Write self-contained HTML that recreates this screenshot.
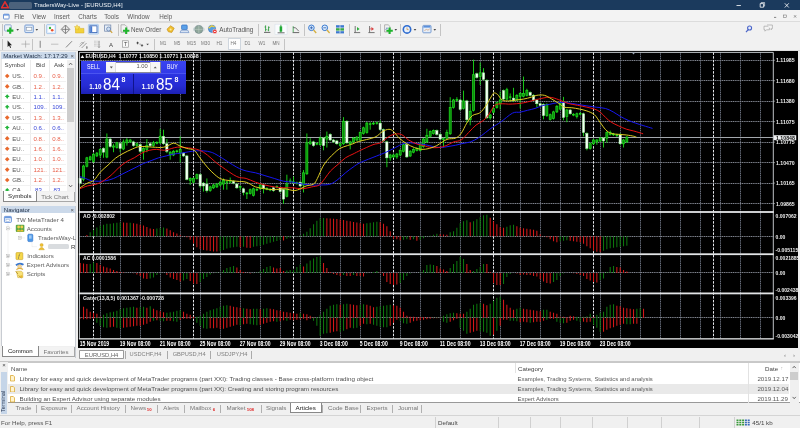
<!DOCTYPE html><html><head><meta charset="utf-8"><title>TradersWay-Live - [EURUSD,H4]</title><style>
*{box-sizing:border-box;margin:0;padding:0}
html{background:#f0f0f0}body{opacity:.999}html,body{width:800px;height:428px;overflow:hidden;background:#f0f0f0;font-family:"Liberation Sans",sans-serif;font-size:5.4px;color:#222}
.a{position:absolute}
.chart{position:absolute;display:block}
#title{left:0;top:0;width:800px;height:10.3px;background:#1b3a5d;color:#fff}
#menu{left:0;top:10.3px;width:800px;height:11.4px;background:#f3f3f3;border-bottom:0.6px solid #dcdcdc}
#tb1{left:0;top:21.7px;width:800px;height:15.3px;background:#f1f1f1}
#tb2{left:0;top:37px;width:800px;height:14px;background:#f1f1f1}
.t{position:absolute;white-space:nowrap;line-height:1}
.sep{position:absolute;width:0.6px;background:#c4c4c4}
.panel{position:absolute;background:#fff;border:0.6px solid #b9c0c8}
.phead{position:absolute;background:#cbd9ea;color:#1c2c44}
.tab{position:absolute;border:0.6px solid #a8a8a8;background:#f3f3f3;color:#555;text-align:center;line-height:1}
.tab.on{background:#fff;color:#222;border-color:#888}
.ic{position:absolute}
</style></head><body>
<div id="title" class="a"></div>
<svg class="ic" style="left:1px;top:1.2px" width="8" height="8" viewBox="0 0 8 8"><path d="M4 0.8L7.4 6.8H0.6Z" fill="none" stroke="#e03030" stroke-width="1.5"/></svg>
<div class="a" style="left:8.6px;top:1.6px;width:23px;height:7.4px;background:#4c627c;border-radius:1.5px;filter:blur(0.6px)"></div>
<div class="t " style="left:34px;top:2.1px;color:#eef2f6;font-size:6px">TradersWay-Live - [EURUSD,H4]</div>
<svg class="ic" style="left:735px;top:0" width="65" height="10.5" viewBox="0 0 65 10.5"><path d="M1.5 5.5h4.4" stroke="#fff" stroke-width="0.8"/><path d="M25.2 3.6h3.4v3.6h-3.4z" stroke="#fff" stroke-width="0.8" fill="none"/><path d="M26.2 3.4v-0.9h3.4v3.6h-0.9" stroke="#fff" stroke-width="0.6" fill="none"/><path d="M49.8 3.3l4 4.2M53.8 3.3l-4 4.2" stroke="#fff" stroke-width="0.8"/></svg>
<div id="menu" class="a"></div>
<svg class="ic" style="left:2.5px;top:12.5px" width="7" height="7" viewBox="0 0 7 7"><rect x="0.5" y="1.2" width="5.6" height="4.8" rx="0.8" fill="#fff" stroke="#4a78c8" stroke-width="0.8"/><rect x="0.5" y="1.2" width="5.6" height="1.4" fill="#6a98e0"/></svg>
<div class="t " style="left:14.2px;top:13.6px;font-size:6.3px;color:#5a5a5a">File</div>
<div class="t " style="left:32.3px;top:13.6px;font-size:6.3px;color:#5a5a5a">View</div>
<div class="t " style="left:54px;top:13.6px;font-size:6.3px;color:#5a5a5a">Insert</div>
<div class="t " style="left:78.3px;top:13.6px;font-size:6.3px;color:#5a5a5a">Charts</div>
<div class="t " style="left:104.2px;top:13.6px;font-size:6.3px;color:#5a5a5a">Tools</div>
<div class="t " style="left:127.2px;top:13.6px;font-size:6.3px;color:#5a5a5a">Window</div>
<div class="t " style="left:159.3px;top:13.6px;font-size:6.3px;color:#5a5a5a">Help</div>
<svg class="ic" style="left:772px;top:11px" width="28" height="10" viewBox="0 0 28 10"><path d="M2 6.4h2.2" stroke="#555" stroke-width="0.7"/><rect x="11.7" y="4" width="2.6" height="2.6" fill="none" stroke="#666" stroke-width="0.5"/><path d="M22 4.2l2.2 2.4M24.2 4.2l-2.2 2.4" stroke="#666" stroke-width="0.6"/></svg>
<div id="tb1" class="a"></div><div id="tb2" class="a"></div>
<div class="a" style="left:0;top:21.9px;width:199px;height:0.6px;background:#dcdcdc"></div>
<div class="a" style="left:0;top:36.9px;width:440px;height:0.6px;background:#dedede"></div>
<div class="a" style="left:0;top:50.4px;width:800px;height:0.6px;background:#dedede"></div>
<div class="sep" style="left:2.2px;top:24px;height:11.5px"></div>
<div class="sep" style="left:43.5px;top:24px;height:11.5px"></div>
<div class="sep" style="left:117.5px;top:24px;height:11.5px"></div>
<div class="sep" style="left:258px;top:24px;height:11.5px"></div>
<div class="sep" style="left:303.5px;top:24px;height:11.5px"></div>
<div class="sep" style="left:349px;top:24px;height:11.5px"></div>
<div class="sep" style="left:379.5px;top:24px;height:11.5px"></div>
<div class="sep" style="left:399.5px;top:24px;height:11.5px"></div>
<div class="sep" style="left:439.5px;top:24px;height:11.5px"></div>
<div class="sep" style="left:2.2px;top:38.5px;height:11px"></div>
<div class="sep" style="left:32px;top:38.5px;height:11px"></div>
<div class="sep" style="left:153.5px;top:38.5px;height:11px"></div>
<div class="sep" style="left:283.5px;top:38.5px;height:11px"></div>
<div class="t " style="left:131px;top:26.6px;font-size:6.3px;color:#555">New Order</div>
<div class="t " style="left:219.3px;top:26.6px;font-size:6.3px;color:#555">AutoTrading</div>
<div class="a" style="left:227.5px;top:38.3px;width:13.5px;height:11.4px;background:#fdfdfd;border:0.6px solid #cfd6de"></div>
<div class="t " style="left:160px;top:42px;font-size:4.6px;color:#777">M1</div>
<div class="t " style="left:174px;top:42px;font-size:4.6px;color:#777">M5</div>
<div class="t " style="left:187px;top:42px;font-size:4.6px;color:#777">M15</div>
<div class="t " style="left:201px;top:42px;font-size:4.6px;color:#777">M30</div>
<div class="t " style="left:216.5px;top:42px;font-size:4.6px;color:#777">H1</div>
<div class="t " style="left:230.5px;top:42px;font-size:4.6px;color:#777">H4</div>
<div class="t " style="left:244.5px;top:42px;font-size:4.6px;color:#777">D1</div>
<div class="t " style="left:258.5px;top:42px;font-size:4.6px;color:#777">W1</div>
<div class="t " style="left:272.5px;top:42px;font-size:4.6px;color:#777">MN</div>
<svg class="ic" style="left:0;top:22px" width="800" height="29" viewBox="0 22 800 29">
<rect x="4.6" y="24.8" width="6.6" height="6.2" rx="0.8" fill="#eaf1fa" stroke="#7d9cc8" stroke-width="0.8"/>
<path d="M6.999999999999999 30.6h6.4M10.2 27.400000000000002v6.4" stroke="#1fb42c" stroke-width="2.1" fill="none"/>
<path d="M16.4 29.099999999999998h2.6l-1.3 1.6z" fill="#444"/>
<rect x="24.9" y="25" width="8.4" height="7.6" rx="0.8" fill="#dfeaf8" stroke="#6c94cf" stroke-width="0.9"/><rect x="26.4" y="27.6" width="5.4" height="2.6" fill="#fff" stroke="#7a8aa0" stroke-width="0.5"/>
<path d="M35.5 29.099999999999998h2.6l-1.3 1.6z" fill="#444"/>
<rect x="46.6" y="24.6" width="9" height="9" rx="0.6" fill="#e4eefb" stroke="#9cc0ea" stroke-width="0.8"/><rect x="48.3" y="26.2" width="5.6" height="5.8" fill="#fff"/><circle cx="50" cy="28" r="1.2" fill="#3cb43c"/><circle cx="52.2" cy="30.2" r="1.3" fill="#e8502c"/>
<path d="M65.5 25l4.3 4.4l-4.3 4.4l-4.3 -4.4z" fill="#e9e9e9" stroke="#777" stroke-width="0.9"/><path d="M65.5 25.5v7.8M61.8 29.4h7.4" stroke="#666" stroke-width="0.7"/>
<path d="M75.5 27.2h4l1 1.2h3.4v4.6h-8.4z" fill="#f2d23a" stroke="#d4aa1c" stroke-width="0.5"/><path d="M77 24.8l0.9 1.7l1.9 0.2l-1.4 1.3l0.4 1.9l-1.8 -1l-1.7 1l0.4 -1.9l-1.4 -1.3l1.9 -0.2z" fill="#f8e05a" stroke="#d8ae20" stroke-width="0.4"/>
<rect x="88.4" y="24.4" width="10" height="9.6" rx="0.6" fill="#e4eefb" stroke="#9cc0ea" stroke-width="0.8"/><rect x="89.8" y="25.8" width="7.2" height="6.8" fill="#fff" stroke="#3a68b8" stroke-width="0.9"/><rect x="90.2" y="26.2" width="2" height="6" fill="#4a7ad0"/>
<rect x="104.6" y="25" width="6.2" height="6.2" fill="#e6eef8" stroke="#7a8eb0" stroke-width="0.8"/><circle cx="108.6" cy="29" r="2" fill="#cfe0f4" stroke="#5a78a8" stroke-width="0.7"/><path d="M110.2 30.6l2 2.3" stroke="#d0a030" stroke-width="1.1"/>
<path d="M121 24.8h4l1.8 1.8v5.6h-5.8z" fill="#f2f2f2" stroke="#999" stroke-width="0.7"/>
<path d="M123.0 30.8h6.4M126.2 27.6v6.4" stroke="#1fb42c" stroke-width="2.1" fill="none"/>
<path d="M167 29.2l3.6 -3.4l3.6 2.4l-2.4 4.2l-3.4 -0.6z" fill="#f0c030" stroke="#c89018" stroke-width="0.7"/><circle cx="170.6" cy="29.4" r="1" fill="#fbe9a0"/>
<rect x="181.6" y="25" width="5.6" height="4.6" rx="0.8" fill="#5aa0e8" stroke="#2c6cc0" stroke-width="0.7"/><path d="M180 32.6l1.2 -2.4h6.6l1.2 2.4z" fill="#d8e4f4" stroke="#5a82c0" stroke-width="0.6"/>
<circle cx="198.8" cy="29.4" r="4" fill="#8ea69a" stroke="#70848a" stroke-width="0.6"/><path d="M198.8 25.6v7.6M195 29.4h7.6" stroke="#c4d0c8" stroke-width="0.5"/><path d="M194.2 27.6q-1 1.8 0 3.6M203.6 27.6q1 1.8 0 3.6" stroke="#8aa" stroke-width="0.5" fill="none"/>
<circle cx="212" cy="28.8" r="3.6" fill="#58a0e0" stroke="#2c68b8" stroke-width="0.6"/><path d="M208.6 28.2l3 -2.4l3.2 1.2" stroke="#f0d040" stroke-width="1.3" fill="none"/><circle cx="214.8" cy="31.4" r="2.2" fill="#e83030" stroke="#fff" stroke-width="0.4"/><rect x="213.9" y="30.9" width="1.8" height="1" fill="#fff"/>
<path d="M264 32.4h6.4" stroke="#444" stroke-width="0.8"/><path d="M265.6 25.4v6M268.6 26.4v4.8M265.6 27h-1M265.6 29.6h1M268.6 27.4h1M268.6 30h-1" stroke="#2c9c3c" stroke-width="0.9"/>
<rect x="275" y="24.2" width="12" height="10.2" fill="#fafcfe" stroke="#d4dde8" stroke-width="0.5"/><path d="M277.6 32.8h7" stroke="#444" stroke-width="0.8"/><rect x="279.6" y="26.4" width="2.6" height="5.2" fill="#28b43c"/><path d="M280.9 24.8v7.6" stroke="#1a9a2c" stroke-width="0.8"/>
<path d="M292.6 32.6h6.6" stroke="#444" stroke-width="0.8"/><path d="M293.2 26.2v6" stroke="#2c9c3c" stroke-width="0.8"/><path d="M293.2 27.6l2.4 0.2l3.2 3.4" stroke="#555" stroke-width="0.8" fill="none"/>
<circle cx="311.4" cy="27.8" r="2.8" fill="#dcecfc" stroke="#3a7ad0" stroke-width="1"/><path d="M313.59999999999997 30l2.6 3" stroke="#d4b040" stroke-width="1.3"/>
<path d="M309.9 27.8h3" stroke="#2a5cb0" stroke-width="0.8"/>
<path d="M311.4 26.3v3" stroke="#2a5cb0" stroke-width="0.8"/>
<circle cx="324.8" cy="27.8" r="2.8" fill="#dcecfc" stroke="#3a7ad0" stroke-width="1"/><path d="M327.0 30l2.6 3" stroke="#d4b040" stroke-width="1.3"/>
<path d="M323.3 27.8h3" stroke="#2a5cb0" stroke-width="0.8"/>
<g><rect x="336" y="25.2" width="8" height="2.4" fill="#3c78d0"/><rect x="336" y="28.2" width="8" height="2.4" fill="#38a848"/><rect x="336" y="31.2" width="8" height="2.2" fill="#3c78d0"/><path d="M340 25.2v8.2" stroke="#f0f0f0" stroke-width="0.7"/></g>
<path d="M355.2 26v6.4M354 32.6h6.2" stroke="#555" stroke-width="0.8" fill="none"/><path d="M357 27l2.6 1.9l-2.6 1.9z" fill="#2cae3c"/>
<path d="M369.6 26v6.4M368.4 32.6h6.2" stroke="#555" stroke-width="0.8" fill="none"/><path d="M371.4 27l2.6 1.9l-2.6 1.9z" fill="#d84040"/><path d="M369.6 28.9h2" stroke="#d84040" stroke-width="0.7"/>
<path d="M384.6 24.8h3.6l1.8 1.8v5.4h-5.4z" fill="#f2f2f2" stroke="#999" stroke-width="0.7"/><path d="M385.6 30l1.4 -2.4l1.2 1.4" stroke="#3a6cc0" stroke-width="0.6" fill="none"/>
<path d="M386.40000000000003 30.8h6.4M389.6 27.6v6.4" stroke="#1fb42c" stroke-width="2.1" fill="none"/>
<path d="M394.5 29.099999999999998h2.6l-1.3 1.6z" fill="#444"/>
<circle cx="407" cy="29.4" r="3.7" fill="#e8f0fa" stroke="#2e6cd0" stroke-width="1.6"/><path d="M407 27.4v2.2h1.6" stroke="#c88a3a" stroke-width="0.7" fill="none"/>
<path d="M413.7 29.099999999999998h2.6l-1.3 1.6z" fill="#444"/>
<rect x="422.8" y="25.4" width="8.2" height="7.4" rx="0.8" fill="#e6eef8" stroke="#6c94cf" stroke-width="0.9"/><rect x="423.4" y="26" width="7" height="1.6" fill="#5a90dc"/><path d="M424.4 30.6l2 -1.2l1.6 0.8l1.8 -1.4" stroke="#d08a50" stroke-width="0.6" fill="none"/>
<path d="M433.5 29.099999999999998h2.6l-1.3 1.6z" fill="#444"/>
<circle cx="749.6" cy="28" r="2" fill="#e8eefc" stroke="#4a64c8" stroke-width="1.1"/><path d="M748.2 29.6l-2.2 2.6" stroke="#4a64c8" stroke-width="1.2"/>
<path d="M764 26.2h5.4v3.6h-3l-1.4 1.4v-1.4h-1z" fill="#f4f4f4" stroke="#999" stroke-width="0.6"/><path d="M767 25h5.4v3.6h-1v1.2l-1.2 -1.2" fill="#f4f4f4" stroke="#999" stroke-width="0.6"/>
<path d="M7.6 40.6v6.4l1.5 -1.4l1.1 2.3l0.9 -0.4l-1.1 -2.3h2z" fill="#222"/>
<path d="M25.6 40.6v7M21.4 44.1h8.4" stroke="#999" stroke-width="0.6"/>
<path d="M40.2 40.8v7" stroke="#555" stroke-width="0.7"/>
<path d="M51 44.2h7.4" stroke="#aaa" stroke-width="0.7"/>
<path d="M66 47.4l6 -6.2" stroke="#555" stroke-width="0.7"/>
<path d="M79.6 46.6l5 -5M81.6 48l5 -5" stroke="#666" stroke-width="0.6"/><path d="M80 44.4l2 -2.4l1.6 1.6" stroke="#888" stroke-width="0.5" fill="none"/><text x="86" y="48.6" font-size="3" fill="#444" font-family="'Liberation Sans',sans-serif">E</text>
<path d="M94 41.2h6M94 42.8h6M94 44.4h6M94 46h6" stroke="#999" stroke-width="0.5" stroke-dasharray="0.8 0.5"/><path d="M99 41v6.6M98 46.4l1 1.4l1 -1.4" stroke="#777" stroke-width="0.5" fill="none"/>
<text x="109" y="46.6" font-size="6" fill="#444" font-family="'Liberation Sans',sans-serif">A</text>
<rect x="122.6" y="40.8" width="6" height="6.4" fill="#fafafa" stroke="#888" stroke-width="0.6"/><text x="123.9" y="46.4" font-size="5.6" fill="#444" font-family="'Liberation Sans',sans-serif">T</text>
<path d="M137.6 41.6l1.5 1.6h-1v1h-1v-1h-1zM142 46.8l-1.5 -1.6h1v-1h1v1h1z" fill="#444"/><path d="M139.4 44.2l1.6 0" stroke="#666" stroke-width="0.5"/>
<path d="M146.29999999999998 43.699999999999996h2.6l-1.3 1.6z" fill="#444"/>
</svg>
<div class="panel" style="left:0.5px;top:51.5px;width:75px;height:151.5px;border-color:#c8ccd2"></div>
<div class="phead" style="left:1px;top:52px;width:74px;height:7px"></div>
<div class="t " style="left:3.3px;top:52.8px;font-size:6.1px;color:#1c2c44">Market Watch: 17:17:29</div>
<div class="t " style="left:70.5px;top:52.6px;font-size:6px;color:#555">×</div>
<div class="t " style="left:4.6px;top:62.3px;font-size:6.1px;color:#444">Symbol</div>
<div class="t " style="left:36px;top:62.3px;font-size:6.1px;color:#444">Bid</div>
<div class="t " style="left:54px;top:62.3px;font-size:6.1px;color:#444">Ask</div>
<div class="a" style="left:30.2px;top:59.5px;width:0.5px;height:131.5px;background:#ececec"></div>
<div class="a" style="left:48.8px;top:59.5px;width:0.5px;height:131.5px;background:#ececec"></div>
<div class="a" style="left:1px;top:59.2px;width:0.8px;height:132px;background:#e8e8e8"></div>
<div class="a" style="left:2px;top:81.1px;width:64px;height:0.5px;background:#f1f1f1"></div>
<div class="t " style="left:12.3px;top:73.1px;font-size:6.1px;color:#555">US..</div>
<div class="t " style="left:33.5px;top:73.1px;font-size:6.1px;color:#e8604a">0.9..</div>
<div class="t " style="left:52.2px;top:73.1px;font-size:6.1px;color:#e8604a">0.9..</div>
<div class="a" style="left:2px;top:91.5px;width:64px;height:0.5px;background:#f1f1f1"></div>
<div class="t " style="left:12.3px;top:83.5px;font-size:6.1px;color:#555">GB..</div>
<div class="t " style="left:33.5px;top:83.5px;font-size:6.1px;color:#e8604a">1.2..</div>
<div class="t " style="left:52.2px;top:83.5px;font-size:6.1px;color:#e8604a">1.2..</div>
<div class="a" style="left:2px;top:101.9px;width:64px;height:0.5px;background:#f1f1f1"></div>
<div class="t " style="left:12.3px;top:93.89999999999999px;font-size:6.1px;color:#555">EU..</div>
<div class="t " style="left:33.5px;top:93.89999999999999px;font-size:6.1px;color:#3a48d8">1.1..</div>
<div class="t " style="left:52.2px;top:93.89999999999999px;font-size:6.1px;color:#3a48d8">1.1..</div>
<div class="a" style="left:2px;top:112.3px;width:64px;height:0.5px;background:#f1f1f1"></div>
<div class="t " style="left:12.3px;top:104.3px;font-size:6.1px;color:#555">US..</div>
<div class="t " style="left:33.5px;top:104.3px;font-size:6.1px;color:#3a48d8">109..</div>
<div class="t " style="left:52.2px;top:104.3px;font-size:6.1px;color:#3a48d8">109..</div>
<div class="a" style="left:2px;top:122.7px;width:64px;height:0.5px;background:#f1f1f1"></div>
<div class="t " style="left:12.3px;top:114.69999999999999px;font-size:6.1px;color:#555">US..</div>
<div class="t " style="left:33.5px;top:114.69999999999999px;font-size:6.1px;color:#e8604a">1.3..</div>
<div class="t " style="left:52.2px;top:114.69999999999999px;font-size:6.1px;color:#e8604a">1.3..</div>
<div class="a" style="left:2px;top:133.1px;width:64px;height:0.5px;background:#f1f1f1"></div>
<div class="t " style="left:12.3px;top:125.1px;font-size:6.1px;color:#555">AU..</div>
<div class="t " style="left:33.5px;top:125.1px;font-size:6.1px;color:#3a48d8">0.6..</div>
<div class="t " style="left:52.2px;top:125.1px;font-size:6.1px;color:#3a48d8">0.6..</div>
<div class="a" style="left:2px;top:143.5px;width:64px;height:0.5px;background:#f1f1f1"></div>
<div class="t " style="left:12.3px;top:135.5px;font-size:6.1px;color:#555">EU..</div>
<div class="t " style="left:33.5px;top:135.5px;font-size:6.1px;color:#e8604a">0.8..</div>
<div class="t " style="left:52.2px;top:135.5px;font-size:6.1px;color:#e8604a">0.8..</div>
<div class="a" style="left:2px;top:153.9px;width:64px;height:0.5px;background:#f1f1f1"></div>
<div class="t " style="left:12.3px;top:145.9px;font-size:6.1px;color:#555">EU..</div>
<div class="t " style="left:33.5px;top:145.9px;font-size:6.1px;color:#e8604a">1.6..</div>
<div class="t " style="left:52.2px;top:145.9px;font-size:6.1px;color:#e8604a">1.6..</div>
<div class="a" style="left:2px;top:164.3px;width:64px;height:0.5px;background:#f1f1f1"></div>
<div class="t " style="left:12.3px;top:156.29999999999998px;font-size:6.1px;color:#555">EU..</div>
<div class="t " style="left:33.5px;top:156.29999999999998px;font-size:6.1px;color:#e8604a">1.0..</div>
<div class="t " style="left:52.2px;top:156.29999999999998px;font-size:6.1px;color:#e8604a">1.0..</div>
<div class="a" style="left:2px;top:174.7px;width:64px;height:0.5px;background:#f1f1f1"></div>
<div class="t " style="left:12.3px;top:166.70000000000002px;font-size:6.1px;color:#555">EU..</div>
<div class="t " style="left:33.5px;top:166.70000000000002px;font-size:6.1px;color:#e8604a">121..</div>
<div class="t " style="left:52.2px;top:166.70000000000002px;font-size:6.1px;color:#e8604a">121..</div>
<div class="a" style="left:2px;top:185.1px;width:64px;height:0.5px;background:#f1f1f1"></div>
<div class="t " style="left:12.3px;top:177.1px;font-size:6.1px;color:#555">GB..</div>
<div class="t " style="left:33.5px;top:177.1px;font-size:6.1px;color:#e8604a">1.2..</div>
<div class="t " style="left:52.2px;top:177.1px;font-size:6.1px;color:#e8604a">1.2..</div>
<div class="a" style="left:2px;top:195.5px;width:64px;height:0.5px;background:#f1f1f1"></div>
<div class="a" style="left:2px;top:187.2px;width:64px;height:4.6px;overflow:hidden"><div class="t" style="left:10.3px;top:0.3px;font-size:6.1px;color:#333">CA..</div><div class="t" style="left:33px;top:0.3px;font-size:6.1px;color:#3a48d8">83..</div><div class="t" style="left:51.5px;top:0.3px;font-size:6.1px;color:#3a48d8">83..</div></div>
<svg class="ic" style="left:1px;top:70px" width="66" height="121" viewBox="1 70 66 121"><path d="M7.2 73.7l2.3 2.3l-2.3 2.3l-2.3 -2.3z" fill="#e8682c"/><path d="M7.2 84.1l2.3 2.3l-2.3 2.3l-2.3 -2.3z" fill="#e8682c"/><path d="M7.2 94.3l2.5 2.6h-1.3l-1.2 2.2l-1.2 -2.2h-1.3z" fill="#22b43a"/><path d="M7.2 104.7l2.5 2.6h-1.3l-1.2 2.2l-1.2 -2.2h-1.3z" fill="#22b43a"/><path d="M7.2 115.3l2.3 2.3l-2.3 2.3l-2.3 -2.3z" fill="#e8682c"/><path d="M7.2 125.5l2.5 2.6h-1.3l-1.2 2.2l-1.2 -2.2h-1.3z" fill="#22b43a"/><path d="M7.2 136.1l2.3 2.3l-2.3 2.3l-2.3 -2.3z" fill="#e8682c"/><path d="M7.2 146.5l2.3 2.3l-2.3 2.3l-2.3 -2.3z" fill="#e8682c"/><path d="M7.2 156.9l2.3 2.3l-2.3 2.3l-2.3 -2.3z" fill="#e8682c"/><path d="M7.2 167.3l2.3 2.3l-2.3 2.3l-2.3 -2.3z" fill="#e8682c"/><path d="M7.2 177.7l2.3 2.3l-2.3 2.3l-2.3 -2.3z" fill="#e8682c"/><path d="M7.2 187.9l2.5 2.6h-1.3l-1.2 2.2l-1.2 -2.2h-1.3z" fill="#22b43a"/></svg>
<div class="a" style="left:66.5px;top:59.5px;width:8px;height:131.5px;background:#f0f0f0"></div>
<div class="a" style="left:67.3px;top:67.6px;width:6.5px;height:54.6px;background:#cdcdcd"></div>
<svg class="ic" style="left:0;top:0" width="800" height="428" viewBox="0 0 800 428"><path d="M69.0 64.9l1.6 -1.8l1.6 1.8" stroke="#444" stroke-width="0.8" fill="none"/></svg>
<svg class="ic" style="left:0;top:0" width="800" height="428" viewBox="0 0 800 428"><path d="M69.0 185.1l1.6 1.8l1.6 -1.8" stroke="#444" stroke-width="0.8" fill="none"/></svg>
<div class="a" style="left:1px;top:191px;width:74px;height:11.5px;background:#f0f0f0"></div>
<div class="tab on" style="left:3px;top:191px;width:33.5px;height:10.8px;border-top:none;font-size:6.1px;padding-top:2.2px">Symbols</div>
<div class="tab" style="left:36.5px;top:192px;width:38px;height:9.8px;border-top:none;border-left:none;font-size:6.1px;padding-top:1.6px;color:#777">Tick Chart</div>
<div class="panel" style="left:0.5px;top:205.5px;width:75px;height:152.5px;border-color:#c8ccd2"></div>
<div class="phead" style="left:1px;top:206.3px;width:74px;height:6.6px"></div>
<div class="t " style="left:3.8px;top:206.8px;font-size:6.1px;color:#1c2c44">Navigator</div>
<div class="t " style="left:70.5px;top:206.6px;font-size:6px;color:#555">×</div>
<div class="t " style="left:16.3px;top:216.6px;font-size:6.1px;color:#5a5a5a">TW MetaTrader 4</div>
<div class="t " style="left:26.8px;top:225.5px;font-size:6.1px;color:#5a5a5a">Accounts</div>
<div class="t " style="left:38px;top:235px;font-size:6.1px;color:#5a5a5a">TradersWay-L</div>
<div class="t " style="left:27.3px;top:253.3px;font-size:6.1px;color:#5a5a5a">Indicators</div>
<div class="t " style="left:26.8px;top:262.3px;font-size:6.1px;color:#5a5a5a">Expert Advisors</div>
<div class="t " style="left:26.8px;top:271.3px;font-size:6.1px;color:#5a5a5a">Scripts</div>
<div class="a" style="left:48px;top:244.2px;width:21px;height:5px;background:#d9dcdf;border-radius:1.5px"></div>
<div class="t " style="left:71px;top:243.8px;font-size:6.1px;color:#333">R</div>
<svg class="ic" style="left:0;top:213px" width="76" height="70" viewBox="0 213 76 70">
<path d="M8 224v50.5M8 228.4h4M8 256.2h4M8 265.2h4M8 274.2h4M20 232v6M20 237.9h5M32 242v4.7h5" stroke="#c4c4c4" stroke-width="0.4" stroke-dasharray="0.5 0.5" fill="none"/>
<rect x="6.5" y="226.9" width="3" height="3" fill="#fff" stroke="#aaa" stroke-width="0.4"/><path d="M7.1 228.4h1.8" stroke="#555" stroke-width="0.4"/>
<rect x="18.5" y="236.4" width="3" height="3" fill="#fff" stroke="#aaa" stroke-width="0.4"/><path d="M19.1 237.9h1.8" stroke="#555" stroke-width="0.4"/>
<rect x="6.5" y="254.7" width="3" height="3" fill="#fff" stroke="#aaa" stroke-width="0.4"/><path d="M7.1 256.2h1.8" stroke="#555" stroke-width="0.4"/><path d="M8 255.29999999999998v1.8" stroke="#555" stroke-width="0.4"/>
<rect x="6.5" y="263.7" width="3" height="3" fill="#fff" stroke="#aaa" stroke-width="0.4"/><path d="M7.1 265.2h1.8" stroke="#555" stroke-width="0.4"/><path d="M8 264.3v1.8" stroke="#555" stroke-width="0.4"/>
<rect x="6.5" y="272.7" width="3" height="3" fill="#fff" stroke="#aaa" stroke-width="0.4"/><path d="M7.1 274.2h1.8" stroke="#555" stroke-width="0.4"/><path d="M8 273.3v1.8" stroke="#555" stroke-width="0.4"/>
<rect x="4.4" y="216.4" width="7" height="6" rx="0.8" fill="#eef4fc" stroke="#4a7cd0" stroke-width="0.8"/><rect x="4.8" y="216.8" width="6.2" height="1.4" fill="#6a9ae0"/><rect x="6" y="219.4" width="3.6" height="2" fill="#fff" stroke="#7a9acc" stroke-width="0.4"/>
<rect x="15.8" y="224.8" width="8.6" height="7.2" rx="1" fill="#5aa848"/><circle cx="18.6" cy="227" r="1.4" fill="#f4d050"/><circle cx="21.8" cy="227" r="1.4" fill="#f4d050"/><path d="M16.6 231.4q2 -3.6 4 0zM19.8 231.4q2 -3.6 4 0z" fill="#f0c030"/>
<rect x="27.8" y="234.2" width="5" height="7.4" rx="1" fill="#4a98e8" stroke="#2a6cc8" stroke-width="0.6"/><rect x="29" y="235.6" width="2.6" height="1" fill="#d8ecff"/><rect x="29" y="237.4" width="2.6" height="1" fill="#d8ecff"/>
<circle cx="41.6" cy="245" r="1.6" fill="#f0c030" stroke="#c89a18" stroke-width="0.4"/><path d="M38.8 249.8q2.8 -5 5.6 0z" fill="#f0c030" stroke="#c89a18" stroke-width="0.4"/>
<rect x="16" y="252.6" width="6.8" height="7" rx="0.8" fill="#f6d84a" stroke="#c8a020" stroke-width="0.6"/><text x="18.2" y="258.2" font-size="5.4" font-style="italic" fill="#555" font-family="'Liberation Serif',serif">f</text>
<path d="M15.4 264.6q4 -3.6 8.6 -0.6l-1 1.4q-3.4 -1.6 -6.6 0.6z" fill="#3a78d0"/><circle cx="19.6" cy="266.6" r="2" fill="#f4d8a0" stroke="#c8a060" stroke-width="0.4"/><path d="M16.4 269.6q3.2 -2.6 6.6 0" stroke="#e0b040" stroke-width="1.2" fill="none"/>
<path d="M16.4 271.2h5l1.4 1.4v5h-5z" fill="#f8e27a" stroke="#c8a020" stroke-width="0.5"/><path d="M15.6 271.4l2.4 2.6M18.6 275.6l3 2.4" stroke="#b08a20" stroke-width="0.8"/><circle cx="21.4" cy="276.4" r="1.2" fill="#e8b830"/>
</svg>
<div class="a" style="left:1px;top:346px;width:74px;height:11.6px;background:#f0f0f0"></div>
<div class="tab on" style="left:2px;top:346px;width:36.5px;height:10.8px;border-top:none;font-size:6.1px;padding-top:2.2px">Common</div>
<div class="tab" style="left:38.5px;top:347px;width:36px;height:9.8px;border-top:none;border-left:none;font-size:6.1px;padding-top:1.6px;color:#777">Favorites</div>
<svg class="chart" width="720" height="297" viewBox="0 0 720 297" style="left:78px;top:51px">
<rect x="0" y="0" width="720" height="297" fill="#000"/>
<path d="M22.5 1.4V287.8M42.5 1.4V287.8M62.5 1.4V287.8M82.5 1.4V287.8M102.5 1.4V287.8M122.5 1.4V287.8M142.5 1.4V287.8M162.5 1.4V287.8M182.5 1.4V287.8M202.5 1.4V287.8M222.5 1.4V287.8M242.5 1.4V287.8M262.5 1.4V287.8M282.5 1.4V287.8M302.5 1.4V287.8M322.5 1.4V287.8M342.5 1.4V287.8M362.5 1.4V287.8M382.5 1.4V287.8M402.5 1.4V287.8M422.5 1.4V287.8M442.5 1.4V287.8M462.5 1.4V287.8M482.5 1.4V287.8M502.5 1.4V287.8M522.5 1.4V287.8M542.5 1.4V287.8M562.5 1.4V287.8M582.5 1.4V287.8M602.5 1.4V287.8M622.5 1.4V287.8M642.5 1.4V287.8M662.5 1.4V287.8M682.5 1.4V287.8" stroke="#686e7c" stroke-width="1" stroke-dasharray="1.25 0.55" fill="none"/>
<path d="M1.4 9.5H695.3M1.4 29.5H695.3M1.4 50.5H695.3M1.4 70.5H695.3M1.4 91.5H695.3M1.4 111.5H695.3M1.4 132.5H695.3M1.4 152.5H695.3M1.4 185.5H695.3M1.4 221.5H695.3M1.4 266.5H695.3" stroke="#7e828c" stroke-width="1" stroke-dasharray="1.25 0.55" fill="none"/>
<path d="M15.5 1.4V287.8M115.5 1.4V287.8M215.5 1.4V287.8M315.5 1.4V287.8M415.5 1.4V287.8M515.5 1.4V287.8M635.5 1.4V287.8" stroke="#e4e6ea" stroke-width="1" stroke-dasharray="2.5 1.25" fill="none"/>
<path d="M1.4 86.5H695.3" stroke="#a4a8ae" stroke-width="1"/>
<path d="M5.53 113.75V130.25M8.87 105.88V116.38M12.2 104.75V109.81M15.53 102.13V111.69M18.87 101V106.06M22.2 97.25V106.81M28.87 82.44V107.19M35.53 92.75V101.19M38.87 90.88V97.63M45.53 88.44V99.13M48.87 87.13V94.63M52.2 87.88V92M58.87 91.63V95.75M65.53 96.31V108.69M68.87 88.06V101.19M75.53 89.94V95.75M78.87 90.31V93.31M82.2 77.75V92.94M92.2 100.06V108.69M95.53 99.13V105.13M98.87 98.75V101.75M102.2 85.25V111.5M112.2 126.31V134M115.53 126.31V132.31M118.87 122.56V128.56M132.2 134.75V140.75M135.53 132.88V137.94M138.87 131.94V137M142.2 130.06V135.13M145.53 127.44V138.69M148.87 129.69V138.69M152.2 126.5V132.31M162.2 134.38V139.63M168.87 140.94V148.06M172.2 137.56V143.56M175.53 136.63V145.44M178.86 137.19V140.19M182.2 132.88V138.88M188.86 136.25V139.25M192.2 137.19V140.19M198.86 134.38V137.38M208.86 123.69V146.38M212.2 127.44V131.75M215.53 125.56V132.69M218.86 130.63V133.63M225.53 119V141.5M228.86 82.44V123.88M232.2 87.13V93.88M238.86 91.25V94.25M242.2 85.25V94.81M248.86 80.56V96.5M262.2 91.63V95.56M265.53 66.12V93.88M272.2 89.75V98.38M275.53 86V92M278.86 85.06V90.13M282.2 80.38V90.13M285.53 75.69V83.56M288.86 71V82.63M292.2 71.19V78.69M295.53 71V74M298.86 70.63V73.63M312.2 102.88V109.63M315.53 102.88V107M318.86 101.94V107.75M322.2 98.19V105.13M325.53 92.56V101.38M332.2 99.13V106.06M335.53 97.25V102.31M338.86 96.31V100.44M342.2 91.63V100.44M345.53 86.94V96.69M348.86 77.75V92M352.2 79.44V86.38M355.53 78.5V83.56M365.53 86.56V96.5M368.86 78.69V88.25M372.2 46.19V83.88M375.53 47.88V57.63M378.86 46.19V50.5M385.53 39.63V58.56M392.2 52.75V74.31M395.53 8.69V60.44M402.2 11.5V34M412.2 62.88V68.69M415.53 56.31V62.31M418.86 50.69V57.63M422.2 40.56V58.38M428.86 36.81V49.19M432.2 42.44V50.88M438.86 43.19V50.13M442.2 41.31V57.44M445.53 25.56V46.38M448.86 37.75V45.44M468.86 52.25V65.75M472.2 62.56V69.5M475.53 59.75V68.56M478.86 54.13V62M482.2 51.31V59.19M488.86 57.88V71.19M495.53 62.19V65.19M498.86 61.63V67.44M502.2 61.25V64.25M512.19 91.63V98.56M515.53 87.88V93.88M518.86 87.88V93.69M522.19 86V91.06M528.86 80.38V91.81M532.19 79.63V84.5M535.53 81.88V84.88M538.86 82.81V85.81M545.53 87.88V96.5M548.86 85.06V92M2.2 126.31V133.25M25.53 96.31V106.81M32.2 86.94V96.69M42.2 91.44V101.19M55.53 89.75V95.75M62.2 92.56V102.13M72.2 91.63V95.75M85.53 78.69V93.88M88.87 88.06V102.13M105.53 101V106.06M108.87 103.81V129.31M122.2 122.56V136.81M125.53 131V140.56M128.87 127.44V141.5M155.53 129.13V133.25M158.87 131.94V137.94M165.53 136.63V144.31M185.53 132.88V142.44M195.53 135.69V140.75M202.2 135.69V141.69M205.53 137.56V152.75M222.2 130.06V136.06M235.53 89.75V95.75M245.53 86V99.31M252.2 82.25V90.13M255.53 87.88V92M258.86 88.81V93.88M268.86 69.12V92.94M302.2 69.31V79.81M305.53 77.56V91.06M308.86 89.75V116.19M328.86 92.56V107M358.86 78.5V84.5M362.2 82.25V89.19M382.2 47.88V59.5M388.86 48.81V71.5M398.86 21.63V27.63M405.53 17.13V29.5M408.86 28.19V67.94M425.53 38.5V49.19M435.53 36.81V51.06M452.2 40.38V45.44M455.53 43.19V50.13M458.86 47.88V56.5M462.2 51.63V55.75M465.53 52.25V68.38M485.53 45.88V69.31M492.2 57.88V63.88M505.53 61.63V85.25M508.86 81.31V99.31M525.53 86V96.5M542.19 82.25V93.88" stroke="#19e019" stroke-width="0.9" fill="none"/>
<g fill="#0c8a0c" stroke="#1ee01e" stroke-width="0.7"><rect x="4.53" y="115.06" width="2.0" height="13.31"/><rect x="7.87" y="106.81" width="2.0" height="8.44"/><rect x="11.3" y="105.88" width="1.8" height="2.81"/><rect x="14.53" y="103.25" width="2.0" height="7.31"/><rect x="17.97" y="102.13" width="1.8" height="2.81"/><rect x="21.2" y="98.38" width="2.0" height="5.63"/><rect x="27.87" y="88.06" width="2.0" height="18"/><rect x="34.63" y="95" width="1.8" height="1.13"/><rect x="37.87" y="91.81" width="2.0" height="4.69"/><rect x="44.53" y="90.88" width="2.0" height="7.13"/><rect x="47.87" y="89" width="2.0" height="2.81"/><rect x="51.2" y="89" width="2.0" height="1.88"/><rect x="57.87" y="92.75" width="2.0" height="1.88"/><rect x="64.53" y="97.44" width="2.0" height="2.81"/><rect x="67.87" y="94.63" width="2.0" height="3.75"/><rect x="74.53" y="91.81" width="2.0" height="2.81"/><rect x="77.97" y="91.44" width="1.8" height="0.8"/><rect x="81.2" y="85.25" width="2.0" height="6.56"/><rect x="91.2" y="101.19" width="2.0" height="2.81"/><rect x="94.53" y="100.25" width="2.0" height="3.75"/><rect x="97.97" y="99.88" width="1.8" height="0.8"/><rect x="101.2" y="98.38" width="2.0" height="3.75"/><rect x="111.2" y="127.44" width="2.0" height="1.88"/><rect x="114.53" y="127.44" width="2.0" height="3.75"/><rect x="117.87" y="123.69" width="2.0" height="3.75"/><rect x="131.2" y="135.88" width="2.0" height="3.75"/><rect x="134.53" y="134" width="2.0" height="2.81"/><rect x="137.87" y="133.06" width="2.0" height="2.81"/><rect x="141.2" y="131.19" width="2.0" height="2.81"/><rect x="144.53" y="129.31" width="2.0" height="3.75"/><rect x="147.97" y="130.81" width="1.8" height="0.8"/><rect x="151.3" y="129.31" width="1.8" height="1.88"/><rect x="161.3" y="135.5" width="1.8" height="0.8"/><rect x="167.97" y="142.06" width="1.8" height="0.8"/><rect x="171.2" y="138.69" width="2.0" height="3.75"/><rect x="174.53" y="137.75" width="2.0" height="6.56"/><rect x="177.96" y="138.31" width="1.8" height="0.8"/><rect x="181.2" y="134" width="2.0" height="3.75"/><rect x="187.96" y="137.38" width="1.8" height="0.8"/><rect x="191.3" y="138.31" width="1.8" height="0.8"/><rect x="197.96" y="135.5" width="1.8" height="0.8"/><rect x="207.86" y="133.06" width="2.0" height="12.19"/><rect x="211.3" y="129.88" width="1.8" height="0.8"/><rect x="214.63" y="130.81" width="1.8" height="0.8"/><rect x="217.96" y="131.75" width="1.8" height="0.8"/><rect x="224.53" y="121.81" width="2.0" height="12.19"/><rect x="227.86" y="91.81" width="2.0" height="30.94"/><rect x="231.2" y="90.88" width="2.0" height="1.88"/><rect x="237.96" y="92.38" width="1.8" height="0.8"/><rect x="241.2" y="87.13" width="2.0" height="6.56"/><rect x="247.86" y="85.25" width="2.0" height="2.81"/><rect x="261.3" y="92.75" width="1.8" height="1.88"/><rect x="264.53" y="70.25" width="2.0" height="22.5"/><rect x="271.2" y="90.88" width="2.0" height="1.88"/><rect x="274.53" y="87.13" width="2.0" height="3.75"/><rect x="277.86" y="86.19" width="2.0" height="2.81"/><rect x="281.2" y="81.5" width="2.0" height="7.5"/><rect x="284.53" y="76.81" width="2.0" height="5.63"/><rect x="287.86" y="72.13" width="2.0" height="9.38"/><rect x="291.3" y="72.69" width="1.8" height="0.8"/><rect x="294.63" y="72.13" width="1.8" height="0.8"/><rect x="297.96" y="71.75" width="1.8" height="0.8"/><rect x="311.2" y="104" width="2.0" height="2.81"/><rect x="314.53" y="104" width="2.0" height="1.88"/><rect x="317.86" y="103.06" width="2.0" height="2.81"/><rect x="321.2" y="99.31" width="2.0" height="4.69"/><rect x="324.53" y="93.69" width="2.0" height="6.56"/><rect x="331.2" y="100.25" width="2.0" height="4.69"/><rect x="334.53" y="98.38" width="2.0" height="2.81"/><rect x="337.86" y="97.44" width="2.0" height="1.88"/><rect x="341.2" y="92.75" width="2.0" height="6.56"/><rect x="344.53" y="88.06" width="2.0" height="7.5"/><rect x="347.86" y="84.31" width="2.0" height="6.56"/><rect x="351.2" y="80.56" width="2.0" height="4.69"/><rect x="354.53" y="79.63" width="2.0" height="2.81"/><rect x="364.63" y="87.69" width="1.8" height="0.8"/><rect x="367.86" y="81.5" width="2.0" height="5.63"/><rect x="371.2" y="56.5" width="2.0" height="26.25"/><rect x="374.53" y="49" width="2.0" height="7.5"/><rect x="377.96" y="48.63" width="1.8" height="0.8"/><rect x="384.53" y="49.94" width="2.0" height="7.5"/><rect x="391.2" y="60.25" width="2.0" height="8.44"/><rect x="394.53" y="23.69" width="2.0" height="35.63"/><rect x="401.2" y="21.81" width="2.0" height="3.75"/><rect x="411.2" y="64" width="2.0" height="2.81"/><rect x="414.53" y="57.44" width="2.0" height="3.75"/><rect x="417.86" y="51.81" width="2.0" height="4.69"/><rect x="421.2" y="49" width="2.0" height="3.75"/><rect x="427.86" y="38.69" width="2.0" height="9.38"/><rect x="431.3" y="45.81" width="1.8" height="0.8"/><rect x="437.86" y="44.31" width="2.0" height="4.69"/><rect x="441.2" y="42.44" width="2.0" height="2.81"/><rect x="444.53" y="42.44" width="2.0" height="2.81"/><rect x="447.86" y="39.63" width="2.0" height="4.69"/><rect x="467.86" y="53.38" width="2.0" height="11.25"/><rect x="471.2" y="63.69" width="2.0" height="4.69"/><rect x="474.53" y="60.88" width="2.0" height="6.56"/><rect x="477.86" y="55.25" width="2.0" height="5.63"/><rect x="481.2" y="52.44" width="2.0" height="5.63"/><rect x="487.86" y="59" width="2.0" height="6.56"/><rect x="494.63" y="63.31" width="1.8" height="0.8"/><rect x="497.86" y="62.75" width="2.0" height="2.81"/><rect x="501.3" y="62.38" width="1.8" height="0.8"/><rect x="511.19" y="92.75" width="2.0" height="4.69"/><rect x="514.53" y="89" width="2.0" height="3.75"/><rect x="517.86" y="89" width="2.0" height="1.88"/><rect x="521.19" y="87.13" width="2.0" height="2.81"/><rect x="527.86" y="81.5" width="2.0" height="5.63"/><rect x="531.19" y="81.5" width="2.0" height="1.88"/><rect x="534.63" y="83" width="1.8" height="0.8"/><rect x="537.96" y="83.94" width="1.8" height="0.8"/><rect x="544.53" y="89" width="2.0" height="3.75"/><rect x="547.86" y="86.19" width="2.0" height="4.69"/></g>
<g fill="#f4fff4" stroke="#9df09d" stroke-width="0.5"><rect x="1.05" y="127.44" width="2.3" height="4.69"/><rect x="24.38" y="97.44" width="2.3" height="3.75"/><rect x="31.05" y="88.06" width="2.3" height="7.5"/><rect x="41.05" y="92.56" width="2.3" height="4.88"/><rect x="54.38" y="90.88" width="2.3" height="3.75"/><rect x="61.05" y="93.69" width="2.3" height="6.56"/><rect x="71.05" y="92.75" width="2.3" height="1.88"/><rect x="84.38" y="85.25" width="2.3" height="7.5"/><rect x="87.72" y="92.75" width="2.3" height="7.5"/><rect x="104.38" y="102.13" width="2.3" height="2.81"/><rect x="107.72" y="104.94" width="2.3" height="23.44"/><rect x="121.05" y="123.69" width="2.3" height="11.25"/><rect x="124.38" y="132.13" width="2.3" height="2.81"/><rect x="127.72" y="133.06" width="2.3" height="6.56"/><rect x="154.38" y="130.25" width="2.3" height="1.88"/><rect x="157.72" y="133.06" width="2.3" height="3.75"/><rect x="164.38" y="137.75" width="2.3" height="3.75"/><rect x="184.38" y="134" width="2.3" height="3.75"/><rect x="194.38" y="136.81" width="2.3" height="2.81"/><rect x="201.05" y="136.81" width="2.3" height="3.75"/><rect x="204.38" y="138.69" width="2.3" height="9.38"/><rect x="221.05" y="131.19" width="2.3" height="3.75"/><rect x="234.38" y="90.88" width="2.3" height="3.75"/><rect x="244.38" y="87.13" width="2.3" height="7.5"/><rect x="251.05" y="83.38" width="2.3" height="5.63"/><rect x="254.38" y="89" width="2.3" height="1.88"/><rect x="257.71" y="89.94" width="2.3" height="2.81"/><rect x="267.71" y="70.25" width="2.3" height="21.56"/><rect x="301.05" y="72.13" width="2.3" height="6.56"/><rect x="304.38" y="78.69" width="2.3" height="11.25"/><rect x="307.71" y="90.88" width="2.3" height="15.94"/><rect x="327.71" y="93.69" width="2.3" height="12.19"/><rect x="357.71" y="79.63" width="2.3" height="3.75"/><rect x="361.05" y="83.38" width="2.3" height="4.69"/><rect x="381.05" y="49" width="2.3" height="9.38"/><rect x="387.71" y="49.94" width="2.3" height="18.75"/><rect x="397.71" y="22.75" width="2.3" height="3.75"/><rect x="404.38" y="21.81" width="2.3" height="6.56"/><rect x="407.71" y="29.31" width="2.3" height="37.5"/><rect x="424.38" y="39.63" width="2.3" height="8.44"/><rect x="434.38" y="47.13" width="2.3" height="2.81"/><rect x="451.05" y="41.5" width="2.3" height="2.81"/><rect x="454.38" y="44.31" width="2.3" height="4.69"/><rect x="457.71" y="49" width="2.3" height="3.75"/><rect x="461.05" y="52.75" width="2.3" height="1.88"/><rect x="464.38" y="53.38" width="2.3" height="11.25"/><rect x="484.38" y="51.5" width="2.3" height="15"/><rect x="491.05" y="59" width="2.3" height="3.75"/><rect x="504.38" y="62.75" width="2.3" height="18.75"/><rect x="507.71" y="82.44" width="2.3" height="15"/><rect x="524.38" y="87.13" width="2.3" height="2.81"/><rect x="541.04" y="83.38" width="2.3" height="9.38"/></g>
<path d="M1.88 125.56C2.81 125.88 5.63 126.75 7.5 127.44C9.38 128.13 10.94 129.22 13.13 129.69C15.31 130.16 18.13 130.25 20.63 130.25C23.13 130.25 25.63 130.16 28.13 129.69C30.63 129.22 33.13 128.44 35.63 127.44C38.13 126.44 40.63 124.94 43.13 123.69C45.63 122.44 48.13 121.19 50.63 119.94C53.13 118.69 55.63 117.44 58.13 116.19C60.63 114.94 63.13 113.53 65.63 112.44C68.13 111.34 70.63 110.56 73.13 109.63C75.63 108.69 78.13 107.59 80.63 106.81C83.13 106.03 85.63 105.56 88.13 104.94C90.63 104.31 93.13 103.53 95.63 103.06C98.13 102.59 100.63 102.5 103.13 102.13C105.63 101.75 108.13 101.19 110.63 100.81C113.13 100.44 115.63 100.03 118.13 99.88C120.63 99.72 123.13 99.66 125.63 99.88C128.13 100.09 130.63 100.34 133.13 101.19C135.63 102.03 136.36 102.44 140.63 104.94C144.9 107.44 154.17 113.69 158.75 116.19C163.33 118.69 165 119 168.13 119.94C171.25 120.88 174.38 121.03 177.5 121.81C180.63 122.59 183.75 123.69 186.88 124.63C190 125.56 193.13 126.5 196.25 127.44C199.38 128.38 202.5 129.63 205.63 130.25C208.75 130.88 211.88 130.72 215 131.19C218.13 131.66 221.25 132.59 224.38 133.06C227.5 133.53 230.63 133.84 233.75 134C236.88 134.16 240 134.16 243.13 134C246.25 133.84 249.69 134 252.5 133.06C255.31 132.13 257.5 130.25 260 128.38C262.5 126.5 265 123.84 267.5 121.81C270 119.78 272.5 117.91 275 116.19C277.5 114.47 278.54 113.38 282.5 111.5C286.46 109.63 294.48 106.66 298.75 104.94C303.02 103.22 305 102.59 308.13 101.19C311.25 99.78 314.69 97.91 317.5 96.5C320.31 95.09 322.5 93.53 325 92.75C327.5 91.97 330 91.81 332.5 91.81C335 91.81 337.5 92.44 340 92.75C342.5 93.06 345 93.22 347.5 93.69C350 94.16 352.5 95.09 355 95.56C357.5 96.03 360 96.5 362.5 96.5C365 96.5 367.5 95.94 370 95.56C372.5 95.19 375 94.78 377.5 94.25C380 93.72 382.5 92.94 385 92.38C387.5 91.81 390 91.75 392.5 90.88C395 90 397.5 88.69 400 87.13C402.5 85.56 405 83.38 407.5 81.5C410 79.63 412.5 77.59 415 75.88C417.5 74.16 419.25 73.48 422.5 71.19C425.75 68.9 431.25 63.79 434.5 62.13C437.75 60.46 439.5 61.66 442 61.19C444.5 60.72 447 59.94 449.5 59.31C452 58.69 454.5 58.22 457 57.44C459.5 56.66 462.1 55.3 464.5 54.63C466.9 53.95 468.67 53.9 471.38 53.38C474.08 52.85 477.63 51.75 480.75 51.5C483.88 51.25 487 51.56 490.13 51.88C493.25 52.19 496.38 52.88 499.5 53.38C502.63 53.88 505.75 54.41 508.88 54.88C512 55.34 515.13 55.75 518.25 56.19C521.38 56.63 524.81 56.72 527.63 57.5C530.44 58.28 532.63 59.53 535.13 60.88C537.63 62.22 540.13 64.16 542.63 65.56C545.13 66.97 547.63 68.22 550.13 69.31C552.63 70.41 555.13 71.25 557.63 72.13C560.13 73 562.31 73.69 565.13 74.56C567.94 75.44 572.94 76.91 574.5 77.38" stroke="#1616f0" stroke-width="1" fill="none"/>
<path d="M1.88 137.75C3.13 137.28 6.56 135.72 9.38 134.94C12.19 134.16 15.94 134 18.75 133.06C21.56 132.13 23.75 130.88 26.25 129.31C28.75 127.75 31.25 125.88 33.75 123.69C36.25 121.5 38.75 118.38 41.25 116.19C43.75 114 46.25 112.13 48.75 110.56C51.25 109 53.75 108.22 56.25 106.81C58.75 105.41 61.25 103.38 63.75 102.13C66.25 100.88 68.75 99.94 71.25 99.31C73.75 98.69 76.25 98.38 78.75 98.38C81.25 98.38 83.75 99.47 86.25 99.31C88.75 99.16 91.56 97.97 93.75 97.44C95.94 96.91 97.19 96.28 99.38 96.13C101.56 95.97 104.38 96.28 106.88 96.5C109.38 96.72 111.88 96.97 114.38 97.44C116.88 97.91 119.38 98.22 121.88 99.31C124.38 100.41 126.88 102.13 129.38 104C131.88 105.88 134.38 108.53 136.88 110.56C139.38 112.59 140.73 113.69 144.38 116.19C148.02 118.69 154.79 123.69 158.75 125.56C162.71 127.44 165 126.5 168.13 127.44C171.25 128.38 174.38 130.09 177.5 131.19C180.63 132.28 183.75 133.22 186.88 134C190 134.78 193.13 135.41 196.25 135.88C199.38 136.34 202.5 136.66 205.63 136.81C208.75 136.97 211.88 136.66 215 136.81C218.13 136.97 221.25 137.91 224.38 137.75C227.5 137.59 230.94 136.5 233.75 135.88C236.56 135.25 239.06 135.41 241.25 134C243.44 132.59 245 129.78 246.88 127.44C248.75 125.09 250.31 122.28 252.5 119.94C254.69 117.59 257.5 115.56 260 113.38C262.5 111.19 265 108.53 267.5 106.81C270 105.09 272.5 104.31 275 103.06C277.5 101.81 279.17 100.88 282.5 99.31C285.83 97.75 291.67 94.94 295 93.69C298.33 92.44 300 93.06 302.5 91.81C305 90.56 307.81 87.59 310 86.19C312.19 84.78 313.44 83.84 315.63 83.38C317.81 82.91 320.63 82.44 323.13 83.38C325.63 84.31 328.13 87.44 330.63 89C333.13 90.56 335.63 91.81 338.13 92.75C340.63 93.69 343.13 94 345.63 94.63C348.13 95.25 350.63 96.19 353.13 96.5C355.63 96.81 358.13 96.81 360.63 96.5C363.13 96.19 365.63 95.56 368.13 94.63C370.63 93.69 373.13 91.81 375.63 90.88C378.13 89.94 380.63 90.56 383.13 89C385.63 87.44 388.13 84 390.63 81.5C393.13 79 395.63 76.03 398.13 74C400.63 71.97 403.44 71.19 405.63 69.31C407.81 67.44 409.38 65.25 411.25 62.75C413.13 60.25 414.72 55.98 416.88 54.31C419.03 52.65 421.88 52.95 424.19 52.75C426.5 52.55 428.41 53.13 430.75 53.13C433.09 53.13 435.75 52.97 438.25 52.75C440.75 52.53 443.25 52.28 445.75 51.81C448.25 51.34 450.75 50.56 453.25 49.94C455.75 49.31 457.73 48.68 460.75 48.06C463.77 47.45 468.04 46.15 471.38 46.25C474.71 46.35 477.63 47.66 480.75 48.69C483.88 49.72 487 51.5 490.13 52.44C493.25 53.38 496.38 53.69 499.5 54.31C502.63 54.94 506.06 55.56 508.88 56.19C511.69 56.81 514.19 57.28 516.38 58.06C518.56 58.84 520.13 59.47 522 60.88C523.88 62.28 525.75 64.78 527.63 66.5C529.5 68.22 531.06 69.78 533.25 71.19C535.44 72.59 538.25 73.78 540.75 74.94C543.25 76.09 545.75 77.28 548.25 78.13C550.75 78.97 552.94 79.22 555.75 80C558.56 80.78 563.56 82.34 565.13 82.81" stroke="#ea1212" stroke-width="1" fill="none"/>
<path d="M1.88 136.81C3.13 136.03 7.03 133.38 9.38 132.13C11.72 130.88 13.75 131.19 15.94 129.31C18.13 127.44 20.16 123.41 22.5 120.88C24.84 118.34 27.5 116.41 30 114.13C32.5 111.84 35 109.13 37.5 107.19C40 105.25 42.19 104.03 45 102.5C47.81 100.97 51.56 99.16 54.38 98C57.19 96.84 58.44 95.88 61.88 95.56C65.31 95.25 71.56 95.97 75 96.13C78.44 96.28 80.31 96.59 82.5 96.5C84.69 96.41 85.94 96.28 88.13 95.56C90.31 94.84 93.44 92.34 95.63 92.19C97.81 92.03 99.06 93.75 101.25 94.63C103.44 95.5 106.25 96.66 108.75 97.44C111.25 98.22 114.06 97.75 116.25 99.31C118.44 100.88 119.69 104 121.88 106.81C124.06 109.63 126.88 113.38 129.38 116.19C131.88 119 134.38 121.66 136.88 123.69C139.38 125.72 140.73 127.28 144.38 128.38C148.02 129.47 154.79 129.78 158.75 130.25C162.71 130.72 165 130.25 168.13 131.19C171.25 132.13 174.38 134.78 177.5 135.88C180.63 136.97 183.75 137.28 186.88 137.75C190 138.22 193.13 138.69 196.25 138.69C199.38 138.69 203.13 137.75 205.63 137.75C208.13 137.75 209.38 138.38 211.25 138.69C213.13 139 215 139.78 216.88 139.63C218.75 139.47 220.63 138.53 222.5 137.75C224.38 136.97 225.94 135.72 228.13 134.94C230.31 134.16 233.75 134.31 235.63 133.06C237.5 131.81 237.81 130.41 239.38 127.44C240.94 124.47 243.13 118.53 245 115.25C246.88 111.97 248.75 109.94 250.63 107.75C252.5 105.56 254.38 103.84 256.25 102.13C258.13 100.41 259.69 98.69 261.88 97.44C264.06 96.19 267.19 95.41 269.38 94.63C271.56 93.84 273.13 93.44 275 92.75C276.88 92.06 276.98 91.59 280.63 90.5C284.27 89.41 292.92 87.84 296.88 86.19C300.83 84.53 302.03 81.88 304.38 80.56C306.72 79.25 309.06 78.31 310.94 78.31C312.81 78.31 313.91 79.09 315.63 80.56C317.34 82.03 319.06 85.09 321.25 87.13C323.44 89.16 326.25 91.19 328.75 92.75C331.25 94.31 333.75 95.56 336.25 96.5C338.75 97.44 341.25 98.22 343.75 98.38C346.25 98.53 348.75 98.06 351.25 97.44C353.75 96.81 356.56 95.72 358.75 94.63C360.94 93.53 362.5 91.97 364.38 90.88C366.25 89.78 367.81 88.69 370 88.06C372.19 87.44 375.31 88.06 377.5 87.13C379.69 86.19 381.25 84.94 383.13 82.44C385 79.94 386.88 75.09 388.75 72.13C390.63 69.16 392.19 66.34 394.38 64.63C396.56 62.91 399.69 63.38 401.88 61.81C404.06 60.25 405.63 57.91 407.5 55.25C409.38 52.59 411.75 48.07 413.13 45.88C414.5 43.68 414.69 42.48 415.75 42.06C416.81 41.65 418.09 42.22 419.5 43.38C420.91 44.53 422.31 47.91 424.19 49C426.06 50.09 428.41 49.94 430.75 49.94C433.09 49.94 435.75 49.31 438.25 49C440.75 48.69 443.25 48.53 445.75 48.06C448.25 47.59 451.06 46.81 453.25 46.19C455.44 45.56 456.69 44.63 458.88 44.31C461.06 44 463.98 43.74 466.38 44.31C468.77 44.89 470.85 46.4 473.25 47.75C475.65 49.1 478.56 51.03 480.75 52.44C482.94 53.84 484.19 55.47 486.38 56.19C488.56 56.91 491.38 56.44 493.88 56.75C496.38 57.06 498.88 57.53 501.38 58.06C503.88 58.59 506.38 59 508.88 59.94C511.38 60.88 514.19 61.81 516.38 63.69C518.56 65.56 520.13 68.69 522 71.19C523.88 73.69 525.75 76.81 527.63 78.69C529.5 80.56 531.06 81.66 533.25 82.44C535.44 83.22 538.25 83.13 540.75 83.38C543.25 83.63 545.75 83.63 548.25 83.94C550.75 84.25 554.03 84.88 555.75 85.25C557.47 85.63 558.09 86.03 558.56 86.19" stroke="#dccc22" stroke-width="1" fill="none"/>
<path d="M12.2 185.3V181.3M15.53 185.3V178.8M18.87 185.3V176.5M22.2 185.3V174.6M25.53 185.3V173.7M28.87 185.3V172.8M32.2 185.3V172.7M35.53 185.3V172.2M38.87 185.3V171.8M42.2 185.3V171.4M52.2 185.3V171.7M78.87 185.3V177.4M82.2 185.3V176.9M85.53 185.3V176.5M142.2 185.3V199.9M145.53 185.3V199M148.87 185.3V197.5M152.2 185.3V196.7M155.53 185.3V196.2M158.87 185.3V195.8M165.53 185.3V195.8M175.53 185.3V195.8M178.86 185.3V195.3M182.2 185.3V194.8M185.53 185.3V193.8M188.86 185.3V192.8M192.2 185.3V191.8M195.53 185.3V190.8M198.86 185.3V190M202.2 185.3V189.1M208.86 185.3V187.8M212.2 185.3V186.8M215.53 185.3V185.6M218.86 185.3V185.1M222.2 185.3V184.3M225.53 185.3V182.8M228.86 185.3V180.8M232.2 185.3V177.3M235.53 185.3V173.3M238.86 185.3V169.8M242.2 185.3V167.3M245.53 185.3V166.9M288.86 185.3V172.3M292.2 185.3V171.8M295.53 185.3V171.3M298.86 185.3V170.8M325.53 185.3V188.8M328.86 185.3V188.3M335.53 185.3V188.3M342.2 185.3V188.8M345.53 185.3V187.3M348.86 185.3V185.6M352.2 185.3V184.8M355.53 185.3V183.8M358.86 185.3V182.8M372.2 185.3V181.3M375.53 185.3V180.3M378.86 185.3V176.8M382.2 185.3V172.3M385.53 185.3V170.3M388.86 185.3V169.3M395.53 185.3V170.3M398.86 185.3V168.3M402.2 185.3V166.3M405.53 185.3V164.3M408.86 185.3V163.8M428.86 185.3V175.8M432.2 185.3V174.3M435.53 185.3V173.8M482.2 185.3V190.3M485.53 185.3V189.8M488.86 185.3V189.3M525.53 185.3V199.8M528.86 185.3V198.3M532.19 185.3V197.3M535.53 185.3V196.8M538.86 185.3V196.3M542.19 185.3V195.8M545.53 185.3V195.3M548.86 185.3V194.8M12.2 221.9V212.9M15.53 221.9V211.4M72.2 221.9V227.4M75.53 221.9V226.4M78.87 221.9V223.9M82.2 221.9V222.2M105.53 221.9V229.4M108.87 221.9V227.9M122.2 221.9V230.9M125.53 221.9V227.9M128.87 221.9V225.9M132.2 221.9V223.4M135.53 221.9V222.2M138.87 221.9V221.6M142.2 221.9V221.4M145.53 221.9V218.9M148.87 221.9V216.9M152.2 221.9V215.9M155.53 221.9V214.9M175.53 221.9V222.2M178.86 221.9V221.4M182.2 221.9V219.9M185.53 221.9V217.9M188.86 221.9V215.9M192.2 221.9V214.9M208.86 221.9V219.4M212.2 221.9V218.9M215.53 221.9V218.9M218.86 221.9V215.9M222.2 221.9V213.4M228.86 221.9V212.4M232.2 221.9V209.4M235.53 221.9V207.4M238.86 221.9V205.9M242.2 221.9V205.4M265.53 221.9V223.9M275.53 221.9V223.9M288.86 221.9V222.2M295.53 221.9V220.9M298.86 221.9V219.9M322.2 221.9V231.9M325.53 221.9V228.9M328.86 221.9V224.9M332.2 221.9V222.4M342.2 221.9V221.6M345.53 221.9V218.9M348.86 221.9V213.9M352.2 221.9V213.4M355.53 221.9V213.9M372.2 221.9V216.9M375.53 221.9V212.9M378.86 221.9V209.9M382.2 221.9V205.9M385.53 221.9V207.9M395.53 221.9V219.9M398.86 221.9V217.9M402.2 221.9V215.9M405.53 221.9V212.9M425.53 221.9V232.9M428.86 221.9V225.9M432.2 221.9V222.9M475.53 221.9V230.9M478.86 221.9V228.9M482.2 221.9V224.9M485.53 221.9V222.4M522.19 221.9V228.9M525.53 221.9V227.4M528.86 221.9V220.9M532.19 221.9V215.9M535.53 221.9V214.9M25.53 266.8V263.8M28.87 266.8V262.3M32.2 266.8V261.3M35.53 266.8V260.8M38.87 266.8V259.8M42.2 266.8V258.3M45.53 266.8V257.3M48.87 266.8V256.8M52.2 266.8V256.3M55.53 266.8V255.8M62.2 266.8V256.3M65.53 266.8V255.8M72.2 266.8V255.3M88.87 266.8V261.8M92.2 266.8V261.3M95.53 266.8V260.8M98.87 266.8V259.8M102.2 266.8V259.3M118.87 266.8V265.8M122.2 266.8V264.8M125.53 266.8V262.8M128.87 266.8V260.8M132.2 266.8V259.3M135.53 266.8V258.3M138.87 266.8V257.3M142.2 266.8V255.8M145.53 266.8V254.8M148.87 266.8V254.3M165.53 266.8V257.3M175.53 266.8V257.8M178.86 266.8V257.8M185.53 266.8V257.8M188.86 266.8V257.3M222.2 266.8V262.3M238.86 266.8V266.3M242.2 266.8V263.8M245.53 266.8V260.8M248.86 266.8V257.8M252.2 266.8V254.8M255.53 266.8V253.8M258.86 266.8V253.3M265.53 266.8V253.3M268.86 266.8V252.8M282.2 266.8V253.8M285.53 266.8V253.3M298.86 266.8V255.8M302.2 266.8V255.3M305.53 266.8V254.8M308.86 266.8V254.3M312.2 266.8V253.8M355.53 266.8V266.3M358.86 266.8V266.3M362.2 266.8V266.3M365.53 266.8V264.8M368.86 266.8V263.3M372.2 266.8V262.3M375.53 266.8V261.8M388.86 266.8V260.8M392.2 266.8V257.8M395.53 266.8V253.8M398.86 266.8V252.8M402.2 266.8V252.3M412.2 266.8V252.8M415.53 266.8V249.8M418.86 266.8V246.8M422.2 266.8V245.8M438.86 266.8V257.8M442.2 266.8V256.8M465.53 266.8V258.8M468.86 266.8V258.8M498.86 266.8V265.8M502.2 266.8V266.3M505.53 266.8V265.8M508.86 266.8V265.3M512.19 266.8V262.8M518.86 266.8V263.8M522.19 266.8V261.8M525.53 266.8V260.8M528.86 266.8V255.8M532.19 266.8V253.8M535.53 266.8V253.3M558.86 266.8V257.8M562.19 266.8V257.3M18.87 266.8V271.8M22.2 266.8V274.8M25.53 266.8V276.3M28.87 266.8V276.8M38.87 266.8V276.8M42.2 266.8V277.3M75.53 266.8V269.8M82.2 266.8V269.8M85.53 266.8V270.3M95.53 266.8V270.3M98.87 266.8V270.8M118.87 266.8V271.8M122.2 266.8V274.8M125.53 266.8V277.3M128.87 266.8V277.8M162.2 266.8V274.3M172.2 266.8V273.3M175.53 266.8V273.8M178.86 266.8V274.3M198.86 266.8V270.8M208.86 266.8V269.8M235.53 266.8V269.8M238.86 266.8V274.8M242.2 266.8V284.8M245.53 266.8V282.8M248.86 266.8V282.3M262.2 266.8V280.8M265.53 266.8V279.8M275.53 266.8V277.3M278.86 266.8V276.8M288.86 266.8V273.3M295.53 266.8V273.8M298.86 266.8V274.8M302.2 266.8V275.8M305.53 266.8V276.3M308.86 266.8V276.3M322.2 266.8V269.8M325.53 266.8V272.3M328.86 266.8V272.8M365.53 266.8V270.8M368.86 266.8V271.8M382.2 266.8V276.8M385.53 266.8V279.8M388.86 266.8V282.8M402.2 266.8V280.3M405.53 266.8V280.8M408.86 266.8V281.8M412.2 266.8V284.8M418.86 266.8V279.8M432.2 266.8V269.8M435.53 266.8V269.8M438.86 266.8V270.3M452.2 266.8V271.8M468.86 266.8V268.8M478.86 266.8V270.8M482.2 266.8V271.8M485.53 266.8V272.3M498.86 266.8V269.8M502.2 266.8V270.8M515.53 266.8V273.8M518.86 266.8V276.8M522.19 266.8V280.8M548.86 266.8V273.3M552.19 266.8V273.3" stroke="#0d760d" stroke-width="1.05" fill="none"/>
<path d="M8.87 185.3V184M45.53 185.3V171.5M48.87 185.3V171.8M55.53 185.3V172.3M58.87 185.3V172.8M62.2 185.3V173.7M65.53 185.3V174.6M68.87 185.3V176.1M72.2 185.3V177.4M75.53 185.3V178M88.87 185.3V177.4M92.2 185.3V179.3M95.53 185.3V181.2M98.87 185.3V182.5M102.2 185.3V184M105.53 185.3V184.9M108.87 185.3V186.3M112.2 185.3V188.7M115.53 185.3V192.3M118.87 185.3V196.2M122.2 185.3V198.1M125.53 185.3V199M128.87 185.3V199.6M132.2 185.3V199.9M135.53 185.3V200.5M138.87 185.3V200.6M162.2 185.3V196.2M168.87 185.3V196.7M172.2 185.3V196.9M205.53 185.3V189.5M248.86 185.3V167.3M252.2 185.3V167.5M255.53 185.3V167.7M258.86 185.3V168.1M262.2 185.3V168.5M265.53 185.3V169.1M268.86 185.3V169.7M272.2 185.3V170.3M275.53 185.3V170.9M278.86 185.3V171.5M282.2 185.3V172.3M285.53 185.3V172.8M302.2 185.3V171.3M305.53 185.3V172.8M308.86 185.3V175.3M312.2 185.3V180.3M315.53 185.3V187.8M318.86 185.3V188.3M322.2 185.3V189.3M332.2 185.3V188.8M338.86 185.3V189.8M362.2 185.3V183.3M365.53 185.3V183.5M368.86 185.3V183.7M392.2 185.3V171.3M412.2 185.3V166.8M415.53 185.3V170.3M418.86 185.3V173.3M422.2 185.3V176.3M425.53 185.3V176.8M438.86 185.3V175.3M442.2 185.3V176.8M445.53 185.3V177.3M448.86 185.3V177.8M452.2 185.3V178.3M455.53 185.3V178.8M458.86 185.3V179.8M462.2 185.3V183.3M465.53 185.3V185M468.86 185.3V186.3M472.2 185.3V188.3M475.53 185.3V190.3M478.86 185.3V191.3M492.2 185.3V189.8M495.53 185.3V190.3M498.86 185.3V190.8M502.2 185.3V191.3M505.53 185.3V192.8M508.86 185.3V195.3M512.19 185.3V197.3M515.53 185.3V199.8M518.86 185.3V200.8M522.19 185.3V201.3M2.2 221.9V211.9M5.53 221.9V212.4M8.87 221.9V212.9M18.87 221.9V211.9M22.2 221.9V213.9M25.53 221.9V215.4M28.87 221.9V216.4M32.2 221.9V217.4M35.53 221.9V218.9M38.87 221.9V219.9M42.2 221.9V220.9M45.53 221.9V221.6M55.53 221.9V222.2M58.87 221.9V223.4M62.2 221.9V224.9M65.53 221.9V227.4M68.87 221.9V227.9M88.87 221.9V223.9M92.2 221.9V226.4M95.53 221.9V227.9M98.87 221.9V228.9M102.2 221.9V230.4M112.2 221.9V229.9M115.53 221.9V232.4M118.87 221.9V232.9M158.87 221.9V216.4M162.2 221.9V218.9M165.53 221.9V220.9M168.87 221.9V221.7M172.2 221.9V222.4M195.53 221.9V216.4M198.86 221.9V217.4M202.2 221.9V216.9M205.53 221.9V219.9M225.53 221.9V215.4M245.53 221.9V211.9M248.86 221.9V216.9M252.2 221.9V220.9M255.53 221.9V222.9M258.86 221.9V223.9M262.2 221.9V224.9M268.86 221.9V224.9M272.2 221.9V224.9M278.86 221.9V224.9M282.2 221.9V224.9M285.53 221.9V225.4M302.2 221.9V221.6M305.53 221.9V224.9M308.86 221.9V230.9M312.2 221.9V232.9M315.53 221.9V233.9M318.86 221.9V233.4M358.86 221.9V214.9M362.2 221.9V217.4M365.53 221.9V218.4M368.86 221.9V219.9M388.86 221.9V212.9M392.2 221.9V218.9M408.86 221.9V212.9M412.2 221.9V220.9M415.53 221.9V231.9M418.86 221.9V233.9M422.2 221.9V233.9M438.86 221.9V222.4M442.2 221.9V223.9M445.53 221.9V223.4M448.86 221.9V223.9M452.2 221.9V223.9M455.53 221.9V224.9M458.86 221.9V225.4M462.2 221.9V227.9M465.53 221.9V230.4M468.86 221.9V231.9M472.2 221.9V232.4M495.53 221.9V222.2M498.86 221.9V222.9M502.2 221.9V223.9M505.53 221.9V224.9M508.86 221.9V227.9M512.19 221.9V229.4M515.53 221.9V230.9M518.86 221.9V231.4M538.86 221.9V215.9M542.19 221.9V216.4M545.53 221.9V218.9M548.86 221.9V220.4M5.53 266.8V255.8M8.87 266.8V257.8M12.2 266.8V260.8M15.53 266.8V261.8M18.87 266.8V262.8M22.2 266.8V265.8M58.87 266.8V256.8M68.87 266.8V256.8M75.53 266.8V257.8M78.87 266.8V259.3M82.2 266.8V260.3M85.53 266.8V261.3M105.53 266.8V260.8M108.87 266.8V262.8M112.2 266.8V263.8M115.53 266.8V265.8M152.2 266.8V254.8M155.53 266.8V255.8M158.87 266.8V256.3M162.2 266.8V256.8M168.87 266.8V257.8M172.2 266.8V258.3M182.2 266.8V258.3M192.2 266.8V257.8M195.53 266.8V258.3M198.86 266.8V259.3M202.2 266.8V259.8M205.53 266.8V260.8M208.86 266.8V261.3M212.2 266.8V261.8M215.53 266.8V262.3M218.86 266.8V262.8M225.53 266.8V262.8M228.86 266.8V263.3M232.2 266.8V264.8M235.53 266.8V266.3M262.2 266.8V253.8M272.2 266.8V253.3M275.53 266.8V253.8M278.86 266.8V254.3M288.86 266.8V253.8M292.2 266.8V254.8M295.53 266.8V256.3M315.53 266.8V254.3M318.86 266.8V254.8M322.2 266.8V256.8M325.53 266.8V260.8M328.86 266.8V264.8M332.2 266.8V265.8M335.53 266.8V265.8M338.86 266.8V266M342.2 266.8V266M345.53 266.8V266M348.86 266.8V266.3M352.2 266.8V266.3M378.86 266.8V262.3M382.2 266.8V262.8M385.53 266.8V262.8M405.53 266.8V252.8M408.86 266.8V254.3M425.53 266.8V248.8M428.86 266.8V253.8M432.2 266.8V256.8M435.53 266.8V258.8M445.53 266.8V257.8M448.86 266.8V258.3M452.2 266.8V258.8M455.53 266.8V259.3M458.86 266.8V259.8M462.2 266.8V260.3M472.2 266.8V260.8M475.53 266.8V261.8M478.86 266.8V262.8M482.2 266.8V265.8M485.53 266.8V265.8M488.86 266.8V266.3M492.2 266.8V264.8M495.53 266.8V265.3M515.53 266.8V265.8M538.86 266.8V254.8M542.19 266.8V255.3M545.53 266.8V256.8M548.86 266.8V257.3M552.19 266.8V257.8M555.53 266.8V258.3M565.53 266.8V257.8M2.2 266.8V267.8M5.53 266.8V268.3M8.87 266.8V268.3M12.2 266.8V267.8M15.53 266.8V267.8M32.2 266.8V276.3M35.53 266.8V275.8M45.53 266.8V276.8M48.87 266.8V276.3M52.2 266.8V275.8M55.53 266.8V275.3M58.87 266.8V274.8M62.2 266.8V274.8M65.53 266.8V273.8M68.87 266.8V272.8M72.2 266.8V270.8M78.87 266.8V269.3M88.87 266.8V269.8M92.2 266.8V269.8M102.2 266.8V268.8M105.53 266.8V267.8M108.87 266.8V267.8M112.2 266.8V267.8M115.53 266.8V267.3M132.2 266.8V277.3M135.53 266.8V277.3M138.87 266.8V276.8M142.2 266.8V277.8M145.53 266.8V277.8M148.87 266.8V276.8M152.2 266.8V275.8M155.53 266.8V274.8M158.87 266.8V273.8M165.53 266.8V273.3M168.87 266.8V272.8M182.2 266.8V273.8M185.53 266.8V272.8M188.86 266.8V271.8M192.2 266.8V270.8M195.53 266.8V270.3M202.2 266.8V270.3M205.53 266.8V269.3M212.2 266.8V268.8M215.53 266.8V269.3M218.86 266.8V268.8M222.2 266.8V268.3M225.53 266.8V267.8M228.86 266.8V269.3M232.2 266.8V267.8M252.2 266.8V281.8M255.53 266.8V280.8M258.86 266.8V280.3M268.86 266.8V278.3M272.2 266.8V276.8M282.2 266.8V274.8M285.53 266.8V272.8M292.2 266.8V272.8M312.2 266.8V274.8M315.53 266.8V271.8M318.86 266.8V268.8M332.2 266.8V271.8M335.53 266.8V270.3M338.86 266.8V269.8M342.2 266.8V269.3M345.53 266.8V268.8M348.86 266.8V268.3M352.2 266.8V267.8M355.53 266.8V267.3M358.86 266.8V267.3M362.2 266.8V267.3M372.2 266.8V270.8M375.53 266.8V269.3M378.86 266.8V267.8M392.2 266.8V281.8M395.53 266.8V280.8M398.86 266.8V279.8M415.53 266.8V283.8M422.2 266.8V274.8M425.53 266.8V268.8M428.86 266.8V268.8M442.2 266.8V271.3M445.53 266.8V270.8M448.86 266.8V271.3M455.53 266.8V271.3M458.86 266.8V270.8M462.2 266.8V270.8M465.53 266.8V269.8M472.2 266.8V267.8M475.53 266.8V267.8M488.86 266.8V271.8M492.2 266.8V269.8M495.53 266.8V268.8M505.53 266.8V270.8M508.86 266.8V271.3M512.19 266.8V270.8M525.53 266.8V280.8M528.86 266.8V278.8M532.19 266.8V277.3M535.53 266.8V276.3M538.86 266.8V274.8M542.19 266.8V273.8M545.53 266.8V272.8M555.53 266.8V272.8M558.86 266.8V272.8" stroke="#d41818" stroke-width="1.05" fill="none"/>
<path d="M1.4 287.8V1.4H695.3V287.8" stroke="#d4d8dc" stroke-width="0.9" fill="none"/>
<rect x="0.9" y="160.1" width="694.9" height="1.8" fill="#e2e4e6"/>
<rect x="0.9" y="202.3" width="694.9" height="1.8" fill="#e2e4e6"/>
<rect x="0.9" y="241.5" width="694.9" height="1.8" fill="#e2e4e6"/>
<rect x="0.9" y="287.2" width="694.9" height="1.3" fill="#e4e6e8"/>
<g font-family="'Liberation Sans',sans-serif" font-size="6" font-weight="bold" fill="#ececec">
<text x="698" y="11.45" textLength="18.65" lengthAdjust="spacingAndGlyphs">1.11985</text>
<text x="698" y="31.92" textLength="18.65" lengthAdjust="spacingAndGlyphs">1.11680</text>
<text x="698" y="52.39" textLength="18.65" lengthAdjust="spacingAndGlyphs">1.11380</text>
<text x="698" y="72.86" textLength="18.65" lengthAdjust="spacingAndGlyphs">1.11075</text>
<text x="698" y="93.33" textLength="18.65" lengthAdjust="spacingAndGlyphs">1.10775</text>
<text x="698" y="113.8" textLength="18.65" lengthAdjust="spacingAndGlyphs">1.10470</text>
<text x="698" y="134.27" textLength="18.65" lengthAdjust="spacingAndGlyphs">1.10165</text>
<text x="698" y="154.74" textLength="18.65" lengthAdjust="spacingAndGlyphs">1.09865</text>
<text x="697.6" y="167.2" textLength="21.02" lengthAdjust="spacingAndGlyphs">0.007062</text>
<text x="697.6" y="187.5" textLength="9.81" lengthAdjust="spacingAndGlyphs">0.00</text>
<text x="697.6" y="200.9" textLength="22.7" lengthAdjust="spacingAndGlyphs">-0.005115</text>
<text x="697.6" y="209.1" textLength="23.82" lengthAdjust="spacingAndGlyphs">0.0021885</text>
<text x="697.6" y="224.1" textLength="9.81" lengthAdjust="spacingAndGlyphs">0.00</text>
<text x="697.6" y="240.9" textLength="22.7" lengthAdjust="spacingAndGlyphs">-0.002438</text>
<text x="697.6" y="249.4" textLength="21.02" lengthAdjust="spacingAndGlyphs">0.003396</text>
<text x="697.6" y="269" textLength="9.81" lengthAdjust="spacingAndGlyphs">0.00</text>
<text x="697.6" y="286.8" textLength="22.7" lengthAdjust="spacingAndGlyphs">-0.003042</text>
<text x="1.8" y="294.9" textLength="29.35" lengthAdjust="spacingAndGlyphs" fill="#fff" font-size="6.3">15 Nov 2019</text>
<text x="41.8" y="294.9" textLength="30.77" lengthAdjust="spacingAndGlyphs" fill="#fff" font-size="6.3">19 Nov 08:00</text>
<text x="81.8" y="294.9" textLength="30.77" lengthAdjust="spacingAndGlyphs" fill="#fff" font-size="6.3">21 Nov 08:00</text>
<text x="121.8" y="294.9" textLength="30.77" lengthAdjust="spacingAndGlyphs" fill="#fff" font-size="6.3">25 Nov 08:00</text>
<text x="161.8" y="294.9" textLength="30.77" lengthAdjust="spacingAndGlyphs" fill="#fff" font-size="6.3">27 Nov 08:00</text>
<text x="201.8" y="294.9" textLength="30.77" lengthAdjust="spacingAndGlyphs" fill="#fff" font-size="6.3">29 Nov 08:00</text>
<text x="241.8" y="294.9" textLength="27.93" lengthAdjust="spacingAndGlyphs" fill="#fff" font-size="6.3">3 Dec 08:00</text>
<text x="281.8" y="294.9" textLength="27.93" lengthAdjust="spacingAndGlyphs" fill="#fff" font-size="6.3">5 Dec 08:00</text>
<text x="321.8" y="294.9" textLength="27.93" lengthAdjust="spacingAndGlyphs" fill="#fff" font-size="6.3">9 Dec 08:00</text>
<text x="361.8" y="294.9" textLength="30.77" lengthAdjust="spacingAndGlyphs" fill="#fff" font-size="6.3">11 Dec 08:00</text>
<text x="401.8" y="294.9" textLength="30.77" lengthAdjust="spacingAndGlyphs" fill="#fff" font-size="6.3">13 Dec 08:00</text>
<text x="441.8" y="294.9" textLength="30.77" lengthAdjust="spacingAndGlyphs" fill="#fff" font-size="6.3">17 Dec 08:00</text>
<text x="481.8" y="294.9" textLength="30.77" lengthAdjust="spacingAndGlyphs" fill="#fff" font-size="6.3">19 Dec 08:00</text>
<text x="521.8" y="294.9" textLength="30.77" lengthAdjust="spacingAndGlyphs" fill="#fff" font-size="6.3">23 Dec 08:00</text>
<text x="7.4" y="7.3" textLength="113.3" lengthAdjust="spacingAndGlyphs">EURUSD,H4&#160;&#160;1.10777 1.10850 1.10771 1.10848</text>
<text x="5" y="167.2" textLength="31.89" lengthAdjust="spacingAndGlyphs">AO -0.002802</text>
<text x="5" y="209.4" textLength="33.04" lengthAdjust="spacingAndGlyphs">AC 0.0001586</text>
<text x="5" y="249" textLength="80.99" lengthAdjust="spacingAndGlyphs">Gator(13,8,5) 0.001367 -0.000728</text>
</g>
<path d="M2.6 7l1.8 -3l1.8 3z" fill="#f0f0f0"/>
<path d="M553.8 1.6h3.4l-1.7 2z" fill="#9aa6b4"/>
<path d="M695.3 9.25h1.6M695.3 29.72h1.6M695.3 50.19h1.6M695.3 70.66h1.6M695.3 91.13h1.6M695.3 111.6h1.6M695.3 132.07h1.6M695.3 152.54h1.6" stroke="#d4d8dc" stroke-width="0.6"/>
<rect x="695.6" y="84.2" width="22.6" height="5" fill="#eceeef"/>
<text x="698" y="88.6" font-family="'Liberation Sans',sans-serif" font-size="6" font-weight="bold" fill="#111" textLength="18.9" lengthAdjust="spacingAndGlyphs">1.10848</text>
</svg>
<div class="a" style="left:80.6px;top:61.3px;width:105.6px;height:32.6px;background:linear-gradient(#3a44f0,#323ae8 36%,#2c34e2 38%,#262cd4 75%,#1c20b4);"></div>
<div class="a" style="left:133px;top:73.6px;width:0.7px;height:20.3px;background:#10148c"></div>
<div class="a" style="left:80.6px;top:73.3px;width:105.6px;height:0.6px;background:#4a54f0"></div>
<div class="t " style="left:86.8px;top:64.2px;font-size:6.6px;color:#fff;transform:scaleX(.8);transform-origin:0 0">SELL</div>
<div class="t " style="left:167.4px;top:64.2px;font-size:6.6px;color:#fff;transform:scaleX(.8);transform-origin:0 0">BUY</div>
<div class="a" style="left:106px;top:62px;width:54.5px;height:10.6px;background:#fff;border:0.6px solid #889"></div>
<div class="a" style="left:106.4px;top:62.4px;width:9.8px;height:9.8px;background:#f6f6f6;border-right:0.5px solid #ddd"></div>
<div class="a" style="left:150.4px;top:62.4px;width:9.8px;height:9.8px;background:#f6f6f6;border-left:0.5px solid #ddd"></div>
<svg class="ic" style="left:106px;top:62px" width="55" height="11" viewBox="0 0 55 11"><path d="M3.8 4.6h3l-1.5 1.8z" fill="#555"/><path d="M47.7 6.2h3l-1.5 -1.8z" fill="#555"/></svg>
<div class="t " style="left:136.5px;top:64.3px;font-size:5.8px;color:#555">1.00</div>
<div class="t " style="left:89.2px;top:84.2px;font-size:6.3px;color:#fff;font-weight:bold">1.10</div>
<div class="t " style="left:141.8px;top:84.2px;font-size:6.3px;color:#fff;font-weight:bold">1.10</div>
<div class="t " style="left:103.2px;top:76.6px;font-size:16.9px;color:#fff;transform:scaleX(.9);transform-origin:0 0">84</div>
<div class="t " style="left:155.8px;top:76.6px;font-size:16.9px;color:#fff;transform:scaleX(.9);transform-origin:0 0">85</div>
<div class="t " style="left:121.6px;top:76.3px;font-size:7px;color:#fff;font-weight:bold">8</div>
<div class="t " style="left:174.4px;top:76.3px;font-size:7px;color:#fff;font-weight:bold">8</div>
<div class="a" style="left:76px;top:347.5px;width:724px;height:13px;background:#f0f0f0"></div>
<div class="tab on" style="left:79.4px;top:349.6px;width:44.4px;height:9.8px;font-size:5.8px;padding-top:2px;border-radius:0.8px;color:#666;border-color:#999">EURUSD,H4</div>
<div class="t " style="left:129.6px;top:352px;font-size:5.7px;color:#808080">USDCHF,H4</div>
<div class="t " style="left:172.7px;top:352px;font-size:5.7px;color:#808080">GBPUSD,H4</div>
<div class="t " style="left:216.8px;top:352px;font-size:5.7px;color:#808080">USDJPY,H4</div>
<div class="sep" style="left:124.8px;top:351px;height:8px;background:#aaa"></div>
<div class="sep" style="left:166.5px;top:351px;height:8px;background:#aaa"></div>
<div class="sep" style="left:209.8px;top:351px;height:8px;background:#aaa"></div>
<div class="sep" style="left:251px;top:351px;height:8px;background:#aaa"></div>
<div class="t " style="left:784px;top:352px;font-size:6px;color:#777">‹</div>
<div class="t " style="left:793px;top:352px;font-size:6px;color:#777">›</div>
<div class="a" style="left:0;top:360.6px;width:800px;height:0.7px;background:#c9c9c9"></div>
<div class="a" style="left:8px;top:362.3px;width:792px;height:41px;background:#fff;border-top:0.6px solid #c8c8c8;border-bottom:0.7px solid #999"></div>
<div class="a" style="left:8px;top:384px;width:781px;height:10.4px;background:#e9e9e9"></div>
<div class="a" style="left:1px;top:371.5px;width:6.2px;height:42px;background:#c5d5e8"></div>
<div class="t " style="left:2.2px;top:362px;font-size:6px;color:#444">×</div>
<div class="t" style="left:1.2px;top:411.5px;font-size:5.6px;color:#2a3a55;transform-origin:0 0;transform:rotate(-90deg)">Terminal</div>
<div class="t " style="left:11px;top:365.6px;font-size:6.2px;color:#505050">Name</div>
<div class="t " style="left:518px;top:365.6px;font-size:6.2px;color:#444">Category</div>
<div class="t " style="left:765px;top:365.6px;font-size:6.2px;color:#444">Date</div>
<div class="a" style="left:515px;top:363px;width:0.6px;height:9.5px;background:#e2e2e2"></div>
<div class="a" style="left:748px;top:363px;width:0.6px;height:40px;background:#e2e2e2"></div>
<div class="t " style="left:19.6px;top:375.6px;font-size:6.25px;color:#505050;">Library for easy and quick development of MetaTrader programs (part XXI): Trading classes - Base cross-platform trading object</div>
<div class="t " style="left:517.5px;top:376.5px;font-size:5.95px;color:#5a5a5a;">Examples, Trading Systems, Statistics and analysis</div>
<div class="t " style="left:757.4px;top:375.6px;font-size:6.2px;color:#5a5a5a;">2019.12.17</div>
<svg class="ic" style="left:10.3px;top:375.3px" width="5" height="6.5" viewBox="0 0 5 6.5"><path d="M0.5 0.5h2.8l1.2 1.3v4.2h-4z" fill="#fff4d0" stroke="#d8a020" stroke-width="0.7"/></svg>
<div class="t " style="left:19.6px;top:386.0px;font-size:6.25px;color:#505050;">Library for easy and quick development of MetaTrader programs (part XX): Creating and storing program resources</div>
<div class="t " style="left:517.5px;top:386.9px;font-size:5.95px;color:#5a5a5a;">Examples, Trading Systems, Statistics and analysis</div>
<div class="t " style="left:757.4px;top:386.0px;font-size:6.2px;color:#5a5a5a;">2019.12.04</div>
<svg class="ic" style="left:10.3px;top:385.7px" width="5" height="6.5" viewBox="0 0 5 6.5"><path d="M0.5 0.5h2.8l1.2 1.3v4.2h-4z" fill="#fff4d0" stroke="#d8a020" stroke-width="0.7"/></svg>
<div class="t " style="left:19.6px;top:396.40000000000003px;font-size:6.25px;color:#505050;height:6.8px;overflow:hidden;">Building an Expert Advisor using separate modules</div>
<div class="t " style="left:517.5px;top:397.3px;font-size:5.95px;color:#5a5a5a;height:6.8px;overflow:hidden;">Expert Advisors</div>
<div class="t " style="left:757.4px;top:396.40000000000003px;font-size:6.2px;color:#5a5a5a;height:6.8px;overflow:hidden;">2019.11.29</div>
<svg class="ic" style="left:10.3px;top:396.1px" width="5" height="6.5" viewBox="0 0 5 6.5"><path d="M0.5 0.5h2.8l1.2 1.3v4.2h-4z" fill="#fff4d0" stroke="#d8a020" stroke-width="0.7"/></svg>
<div class="a" style="left:789.5px;top:363px;width:9.5px;height:40px;background:#f0f0f0"></div>
<div class="a" style="left:790.3px;top:372px;width:7.4px;height:8px;background:#cdcdcd"></div>
<svg class="ic" style="left:0;top:0" width="800" height="428" viewBox="0 0 800 428"><path d="M792.6 368.09999999999997l1.6 -1.8l1.6 1.8" stroke="#444" stroke-width="0.8" fill="none"/></svg>
<svg class="ic" style="left:0;top:0" width="800" height="428" viewBox="0 0 800 428"><path d="M792.6 396.90000000000003l1.6 1.8l1.6 -1.8" stroke="#444" stroke-width="0.8" fill="none"/></svg>
<div class="t " style="left:780.5px;top:366px;font-size:5px;color:#bbb">↑</div>
<div class="t " style="left:15.5px;top:405.3px;font-size:6.2px;color:#777">Trade</div>
<div class="t " style="left:41px;top:405.3px;font-size:6.2px;color:#777">Exposure</div>
<div class="t " style="left:76.5px;top:405.3px;font-size:6.2px;color:#777">Account History</div>
<div class="t " style="left:130.5px;top:405.3px;font-size:6.2px;color:#777">News</div>
<div class="t " style="left:163.3px;top:405.3px;font-size:6.2px;color:#777">Alerts</div>
<div class="t " style="left:190px;top:405.3px;font-size:6.2px;color:#777">Mailbox</div>
<div class="t " style="left:226.5px;top:405.3px;font-size:6.2px;color:#777">Market</div>
<div class="t " style="left:266px;top:405.3px;font-size:6.2px;color:#777">Signals</div>
<div class="t " style="left:328px;top:405.3px;font-size:6.2px;color:#777">Code Base</div>
<div class="t " style="left:366.5px;top:405.3px;font-size:6.2px;color:#777">Experts</div>
<div class="t " style="left:398px;top:405.3px;font-size:6.2px;color:#777">Journal</div>
<div class="sep" style="left:35.5px;top:405px;height:7.5px;background:#b0b0b0"></div>
<div class="sep" style="left:71px;top:405px;height:7.5px;background:#b0b0b0"></div>
<div class="sep" style="left:124.5px;top:405px;height:7.5px;background:#b0b0b0"></div>
<div class="sep" style="left:157px;top:405px;height:7.5px;background:#b0b0b0"></div>
<div class="sep" style="left:183.8px;top:405px;height:7.5px;background:#b0b0b0"></div>
<div class="sep" style="left:219.5px;top:405px;height:7.5px;background:#b0b0b0"></div>
<div class="sep" style="left:260.5px;top:405px;height:7.5px;background:#b0b0b0"></div>
<div class="sep" style="left:289.5px;top:405px;height:7.5px;background:#b0b0b0"></div>
<div class="sep" style="left:321.5px;top:405px;height:7.5px;background:#b0b0b0"></div>
<div class="sep" style="left:360px;top:405px;height:7.5px;background:#b0b0b0"></div>
<div class="sep" style="left:391.5px;top:405px;height:7.5px;background:#b0b0b0"></div>
<div class="sep" style="left:420.5px;top:405px;height:7.5px;background:#b0b0b0"></div>
<div class="tab on" style="left:290px;top:403px;width:31.5px;height:10.2px;border-top:none;font-size:6.2px;padding-top:2.2px">Articles</div>
<div class="t " style="left:146.8px;top:408.3px;font-size:4.3px;color:#e02020;font-weight:bold">10</div>
<div class="t " style="left:212.8px;top:408.3px;font-size:4.3px;color:#e02020;font-weight:bold">6</div>
<div class="t " style="left:246.8px;top:408.3px;font-size:4.3px;color:#e02020;font-weight:bold">108</div>
<div class="a" style="left:0;top:414.6px;width:800px;height:13.4px;background:#f0f0f0;border-top:0.6px solid #d4d4d4"></div>
<div class="t " style="left:1px;top:420.4px;font-size:6.2px;color:#505050">For Help, press F1</div>
<div class="t " style="left:438px;top:420.4px;font-size:6.2px;color:#444">Default</div>
<div class="sep" style="left:435px;top:417px;height:11px;background:#d0d0d0"></div>
<div class="sep" style="left:497.5px;top:417px;height:11px;background:#d0d0d0"></div>
<div class="sep" style="left:530px;top:417px;height:11px;background:#d0d0d0"></div>
<div class="sep" style="left:560px;top:417px;height:11px;background:#d0d0d0"></div>
<div class="sep" style="left:592px;top:417px;height:11px;background:#d0d0d0"></div>
<div class="sep" style="left:626.5px;top:417px;height:11px;background:#d0d0d0"></div>
<div class="sep" style="left:661px;top:417px;height:11px;background:#d0d0d0"></div>
<div class="sep" style="left:698.5px;top:417px;height:11px;background:#d0d0d0"></div>
<div class="sep" style="left:733.5px;top:417px;height:11px;background:#d0d0d0"></div>
<svg class="ic" style="left:736px;top:418.5px" width="14" height="7" viewBox="0 0 14 7"><g fill="#3a9a3a"><rect x="0.5" y="0.5" width="2" height="6"/><rect x="3.3" y="0.5" width="2" height="6"/><rect x="6.1" y="0.5" width="2" height="6"/></g><g fill="#3a6aba"><rect x="8.9" y="0.5" width="2" height="6"/><rect x="11.7" y="0.5" width="2" height="6"/></g><rect x="0" y="2.2" width="14" height="0.7" fill="#f0f0f0"/><rect x="0" y="4.2" width="14" height="0.7" fill="#f0f0f0"/></svg>
<div class="t " style="left:752.3px;top:420.4px;font-size:6.2px;color:#444">45/1 kb</div>
</body></html>
